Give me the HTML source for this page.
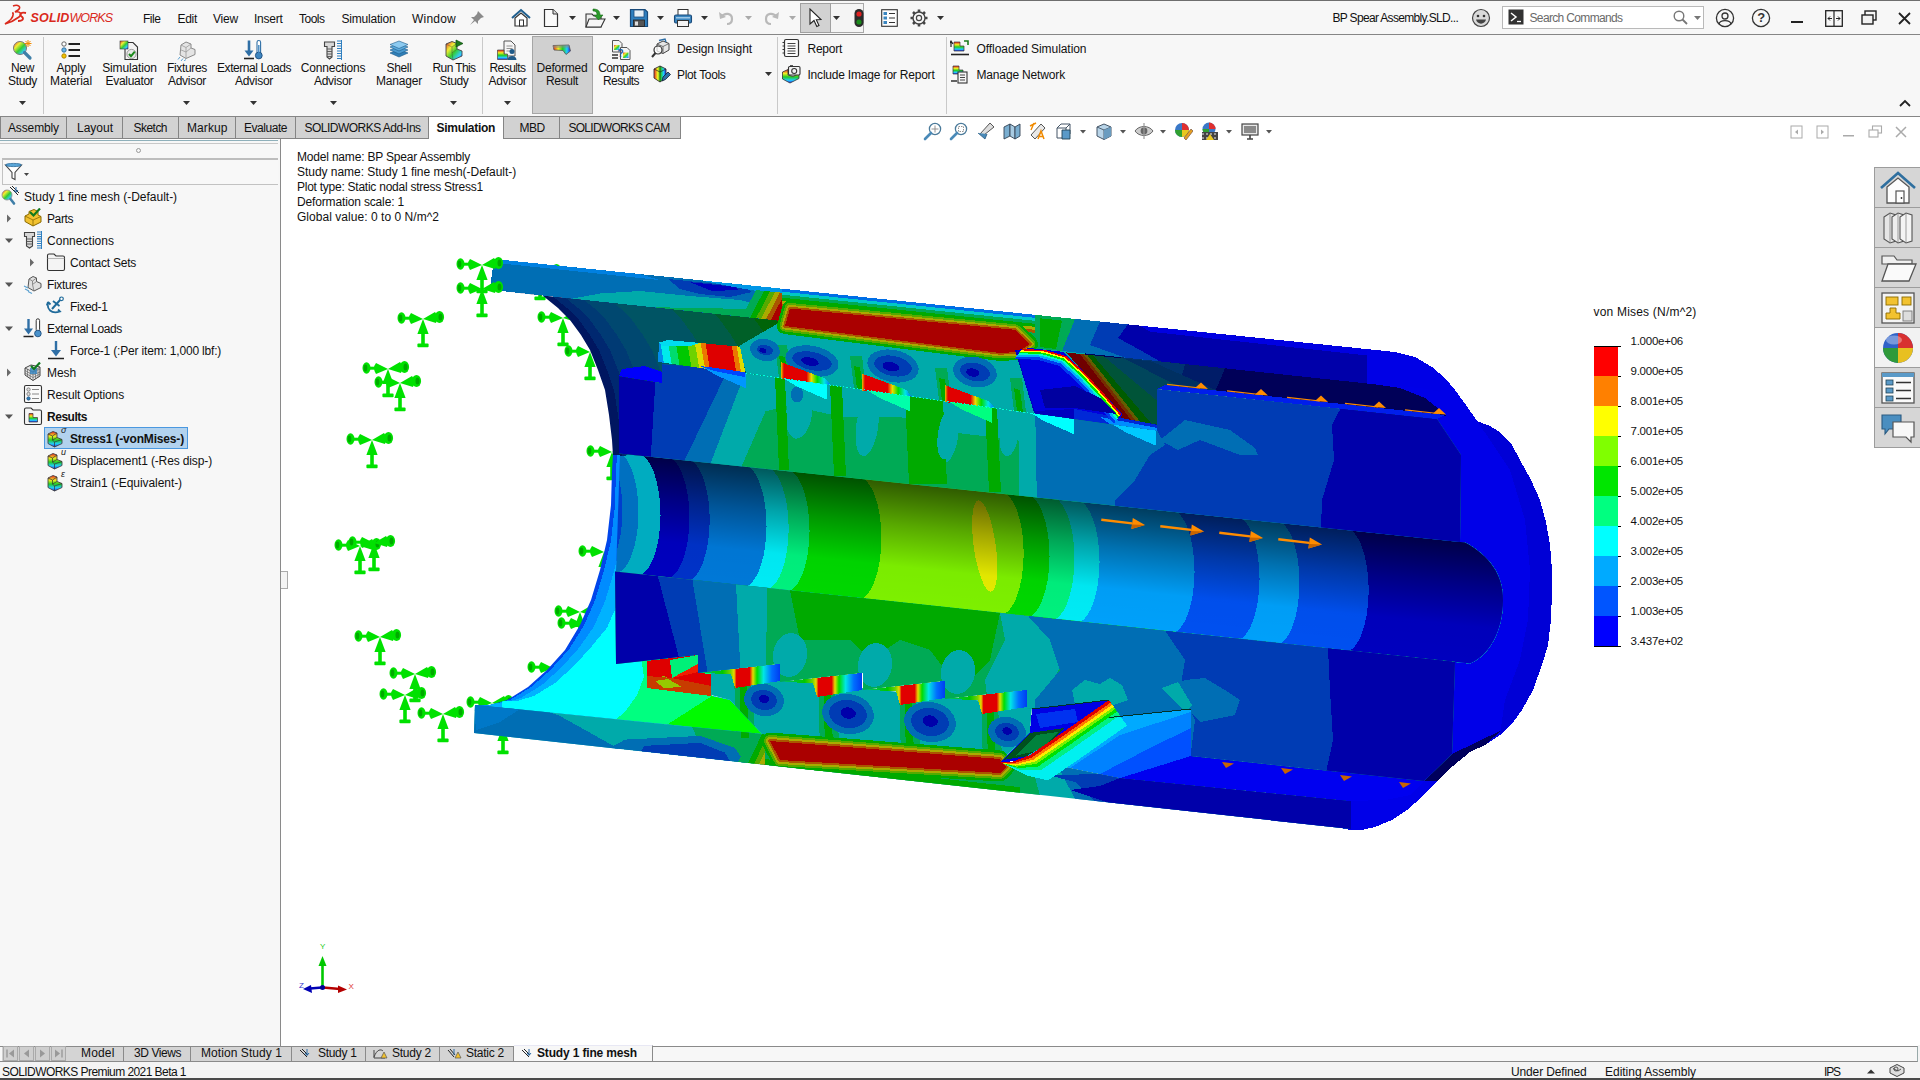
<!DOCTYPE html>
<html><head><meta charset="utf-8"><title>SOLIDWORKS Premium 2021 - BP Spear Assembly</title>
<style>
html,body{margin:0;padding:0;}
body{width:1920px;height:1080px;position:relative;overflow:hidden;background:#fff;font-family:"Liberation Sans",sans-serif;color:#111;}
.t{position:absolute;white-space:nowrap;line-height:1;font-size:12px;}
.a{position:absolute;}
#titlebar{left:0;top:0;width:1920px;height:34px;background:#f7f7f7;border-top:1px solid #6e6e6e;box-sizing:border-box;}
#tline{left:0;top:34px;width:1920px;height:1px;background:#868686;}
#ribbon{left:0;top:35px;width:1920px;height:81px;background:#f7f7f7;}
#rline{left:0;top:116px;width:1920px;height:1px;background:#868686;}
#view{left:281px;top:117px;width:1639px;height:929px;background:#fff;}
#left{left:0;top:139px;width:280px;height:907px;background:#f7f7f7;border-right:1px solid #8a8a8a;}
#lefttop{left:0;top:139px;width:278px;height:5px;background:#f7f7f7;border-top:1px solid #fff;box-shadow:inset 0 1px 0 #8fb0ba;border-bottom:1px solid #c8c8c8;box-sizing:border-box;}
.tab{position:absolute;top:116px;height:23px;background:#d2d2d2;border:1px solid #858585;box-sizing:border-box;}
.sep{position:absolute;top:37px;width:1px;height:77px;background:#c9c9c9;}
.btab{position:absolute;top:1047px;height:14px;background:#d4d4d4;border-right:1px solid #8a8a8a;box-sizing:border-box;}
#bbar{left:0;top:1046px;width:1918px;height:16px;background:#f7f7f7;border-top:1px solid #8a8a8a;border-bottom:1px solid #8a8a8a;border-right:1px solid #9aa;box-sizing:border-box;}
#status{left:0;top:1062px;width:1920px;height:16px;background:#f4f4f4;}
#sbot{left:0;top:1078px;width:1920px;height:2px;background:#4a4a4a;}
</style></head><body>
<div class="a" id="titlebar"></div><div class="a" id="tline"></div>
<div class="a" id="ribbon"></div><div class="a" id="rline"></div>
<div class="a" id="view"></div>
<div class="a" id="left"></div><div class="a" id="lefttop"></div>
<!-- ribbon separators -->
<div class="sep" style="left:43px"></div><div class="sep" style="left:482px"></div><div class="sep" style="left:777px"></div><div class="sep" style="left:946px"></div>
<div class="a" style="left:532px;top:36px;width:61px;height:78px;background:#d0d0d0;border:1px solid #a6a6a6;box-sizing:border-box;"></div>
<div class="a" style="left:800px;top:3px;width:64px;height:30px;border:1px solid #a8a8a8;box-sizing:border-box;background:#f4f4f4;"></div>
<div class="a" style="left:800px;top:3px;width:31px;height:30px;border:1px solid #a0a0a0;box-sizing:border-box;background:#d2d2d2;"></div>
<!-- command tabs -->
<div class="tab" style="left:0;width:67px"></div><div class="tab" style="left:66px;width:57px"></div><div class="tab" style="left:122px;width:57px"></div>
<div class="tab" style="left:178px;width:58px"></div><div class="tab" style="left:235px;width:61px"></div><div class="tab" style="left:295px;width:134px"></div>
<div class="tab" style="left:503px;width:57px"></div><div class="tab" style="left:559px;width:122px"></div>
<!-- search box -->
<div class="a" style="left:1502px;top:6px;width:202px;height:23px;background:#fff;border:1px solid #b9b9b9;box-sizing:border-box;"></div>
<!-- left panel bits -->
<div class="a" style="left:136px;top:148px;width:5px;height:5px;border:1px solid #999;border-radius:4px;box-sizing:border-box;"></div>
<div class="a" style="left:2px;top:158px;width:276px;height:27px;background:#f8f8f8;border:1px solid #c2c2c2;border-top:2px solid #bdbdbd;border-right:none;box-sizing:border-box;"></div>
<div class="a" style="left:44px;top:427px;width:144px;height:22px;background:#b2d2ee;border:1px solid #4a98e0;box-sizing:border-box;"></div>
<div class="a" style="left:281px;top:571px;width:7px;height:18px;border:1px solid #aaa;border-left:none;background:#f4f4f4;box-sizing:border-box;"></div>
<!-- bottom bar -->
<div class="a" id="bbar"></div>
<div class="btab" style="left:2px;width:64px;background:#d0d0d0;"></div>
<div class="btab" style="left:66px;width:58px"></div><div class="btab" style="left:124px;width:67px"></div><div class="btab" style="left:191px;width:101px"></div>
<div class="btab" style="left:292px;width:74px"></div><div class="btab" style="left:366px;width:74px"></div><div class="btab" style="left:440px;width:74px"></div>
<div class="btab" style="left:514px;top:1045px;width:139px;height:16px;background:#f7f7f7;border-top:1px solid #e8e8f4"></div>
<div class="a" id="status"></div><div class="a" id="sbot"></div>
<!-- right task pane -->
<div class="a" style="left:1874px;top:167px;width:46px;height:281px;background:#d6d6d6;border:1px solid #9c9c9c;border-right:none;box-sizing:border-box;"></div>
<div class="a" style="left:1875px;top:328px;width:45px;height:40px;background:#f2f2f2;"></div>
<div class="a" style="left:1875px;top:207px;width:45px;height:1px;background:#9c9c9c"></div><div class="a" style="left:1875px;top:247px;width:45px;height:1px;background:#9c9c9c"></div>
<div class="a" style="left:1875px;top:287px;width:45px;height:1px;background:#9c9c9c"></div><div class="a" style="left:1875px;top:327px;width:45px;height:1px;background:#9c9c9c"></div>
<div class="a" style="left:1875px;top:367px;width:45px;height:1px;background:#9c9c9c"></div><div class="a" style="left:1875px;top:407px;width:45px;height:1px;background:#9c9c9c"></div>
<div class="a" style="left:1918px;top:1045px;width:2px;height:17px;background:#f4f4f4"></div>
<svg class="a" width="0" height="0" style="left:0;top:0"><defs><linearGradient id="rb" x1="0" y1="0" x2="1" y2="1"><stop offset="0" stop-color="#e33"/><stop offset="0.3" stop-color="#ee3"/><stop offset="0.55" stop-color="#3c3"/><stop offset="0.8" stop-color="#3cf"/><stop offset="1" stop-color="#33d"/></linearGradient><linearGradient id="rbh" x1="0" y1="0" x2="1" y2="0"><stop offset="0" stop-color="#e22"/><stop offset="0.3" stop-color="#ee2"/><stop offset="0.55" stop-color="#2c2"/><stop offset="0.8" stop-color="#2cf"/><stop offset="1" stop-color="#22d"/></linearGradient><linearGradient id="rbv" x1="0" y1="0" x2="0" y2="1"><stop offset="0" stop-color="#e22"/><stop offset="0.3" stop-color="#ee2"/><stop offset="0.55" stop-color="#2c2"/><stop offset="0.8" stop-color="#2cf"/><stop offset="1" stop-color="#22d"/></linearGradient></defs></svg>
<svg class="a" style="left:4px;top:4px" width="24" height="22" viewBox="0 0 24 22"><path d="M9,2 C14,0 18,3 14,6 L11,8 C16,7 19,10 15,13 C11,16 5,19 1,20 C6,17 10,13 9,9 L8,9" fill="none" stroke="#da291c" stroke-width="1.6"/><path d="M22,9 C17,8 15,10 17,12 C20,14 20,17 14,17" fill="none" stroke="#da291c" stroke-width="1.8"/></svg>
<span class="t" style="left:30.5px;top:12px;font-size:12.5px;color:#da291c;font-style:italic;font-weight:bold;letter-spacing:0.16px">SOLID</span><span class="t" style="left:69.5px;top:12px;font-size:12.5px;color:#da291c;font-style:italic;letter-spacing:-0.94px">WORKS</span>
<svg class="a" style="left:19px;top:101px" width="7" height="4"><path d="M0,0 L7,0 L3.5,4 Z" fill="#333"/></svg>
<svg class="a" style="left:183px;top:101px" width="7" height="4"><path d="M0,0 L7,0 L3.5,4 Z" fill="#333"/></svg>
<svg class="a" style="left:250px;top:101px" width="7" height="4"><path d="M0,0 L7,0 L3.5,4 Z" fill="#333"/></svg>
<svg class="a" style="left:330px;top:101px" width="7" height="4"><path d="M0,0 L7,0 L3.5,4 Z" fill="#333"/></svg>
<svg class="a" style="left:450px;top:101px" width="7" height="4"><path d="M0,0 L7,0 L3.5,4 Z" fill="#333"/></svg>
<svg class="a" style="left:504px;top:101px" width="7" height="4"><path d="M0,0 L7,0 L3.5,4 Z" fill="#333"/></svg>
<svg class="a" style="left:765px;top:72px" width="7" height="4"><path d="M0,0 L7,0 L3.5,4 Z" fill="#333"/></svg>
<svg class="a" style="left:569px;top:16px" width="7" height="4"><path d="M0,0 L7,0 L3.5,4 Z" fill="#333"/></svg>
<svg class="a" style="left:613px;top:16px" width="7" height="4"><path d="M0,0 L7,0 L3.5,4 Z" fill="#333"/></svg>
<svg class="a" style="left:657px;top:16px" width="7" height="4"><path d="M0,0 L7,0 L3.5,4 Z" fill="#333"/></svg>
<svg class="a" style="left:701px;top:16px" width="7" height="4"><path d="M0,0 L7,0 L3.5,4 Z" fill="#333"/></svg>
<svg class="a" style="left:745px;top:16px" width="7" height="4"><path d="M0,0 L7,0 L3.5,4 Z" fill="#aaa"/></svg>
<svg class="a" style="left:789px;top:16px" width="7" height="4"><path d="M0,0 L7,0 L3.5,4 Z" fill="#aaa"/></svg>
<svg class="a" style="left:833px;top:16px" width="7" height="4"><path d="M0,0 L7,0 L3.5,4 Z" fill="#333"/></svg>
<svg class="a" style="left:937px;top:16px" width="7" height="4"><path d="M0,0 L7,0 L3.5,4 Z" fill="#333"/></svg>
<svg class="a" style="left:469px;top:10px" width="16" height="16" viewBox="0 0 16 16"><path d="M9,1 L15,7 L12,8 L9,11 L9,14 L6,11 L1,15 L5,10 L2,7 L5,7 L8,4 Z" fill="#8a8a8a"/></svg>
<svg class="a" style="left:511px;top:8px" width="20" height="20" viewBox="0 0 20 20"><path d="M1,10 L10,2 L19,10" fill="none" stroke="#1f5f8f" stroke-width="2"/><path d="M4,10 L4,18 L16,18 L16,10 L10,5 Z" fill="#fff" stroke="#333" stroke-width="1.2"/><rect x="8.5" y="12" width="4" height="6" fill="#fff" stroke="#333" stroke-width="1"/></svg>
<svg class="a" style="left:543px;top:8px" width="16" height="20" viewBox="0 0 16 20"><path d="M1.5,1.5 L10,1.5 L14.5,6 L14.5,18.5 L1.5,18.5 Z" fill="#fafafa" stroke="#333" stroke-width="1.2"/><path d="M10,1.5 L10,6 L14.5,6" fill="#ddd" stroke="#333" stroke-width="1"/></svg>
<svg class="a" style="left:584px;top:7px" width="22" height="22" viewBox="0 0 22 22"><path d="M2,7 L8,7 L10,9 L17,9 L17,20 L2,20 Z" fill="#eee" stroke="#333" stroke-width="1.1"/><path d="M5,12 L21,12 L17,20 L2,20 Z" fill="#f6f6f6" stroke="#333" stroke-width="1.1"/><path d="M9,2 C14,2 16,4 16,8 L19,8 L14.5,13 L10,8 L13,8 C13,5 12,4 9,4 Z" fill="#2a9a2a" stroke="#176a17" stroke-width="0.6"/></svg>
<svg class="a" style="left:629px;top:8px" width="20" height="20" viewBox="0 0 20 20"><path d="M1.5,1.5 L16,1.5 L18.5,4 L18.5,18.5 L1.5,18.5 Z" fill="#2f7fbf" stroke="#1a4a7a" stroke-width="1.2"/><rect x="5" y="2" width="10" height="7" fill="#e6eef5" stroke="#1a4a7a" stroke-width="0.8"/><rect x="4.5" y="12" width="11" height="6.5" fill="#555" stroke="#222" stroke-width="0.8"/><rect x="6" y="13.5" width="3" height="4" fill="#ddd"/></svg>
<svg class="a" style="left:673px;top:8px" width="20" height="20" viewBox="0 0 20 20"><rect x="5" y="1.5" width="10" height="6" fill="#fff" stroke="#333" stroke-width="1"/><rect x="1.5" y="7" width="17" height="8" rx="1.5" fill="#3a86c0" stroke="#1a4a7a" stroke-width="1.1"/><rect x="4.5" y="12.5" width="11" height="6" fill="#f4f4f4" stroke="#333" stroke-width="1"/><rect x="3" y="9" width="14" height="1.5" fill="#9cc6e6"/></svg>
<svg class="a" style="left:718px;top:9px" width="18" height="18" viewBox="0 0 18 18"><path d="M3,8 C7,3 14,4 14,10 C14,13 12,15 9,15" fill="none" stroke="#b9b9b9" stroke-width="2.2"/><path d="M1,3 L2,10 L8,8 Z" fill="#b9b9b9"/></svg>
<svg class="a" style="left:762px;top:9px" width="18" height="18" viewBox="0 0 18 18"><path d="M15,8 C11,3 4,4 4,10 C4,13 6,15 9,15" fill="none" stroke="#b9b9b9" stroke-width="2.2"/><path d="M17,3 L16,10 L10,8 Z" fill="#b9b9b9"/></svg>
<svg class="a" style="left:808px;top:8px" width="14" height="20" viewBox="0 0 14 20"><path d="M2,1 L2,16 L6,12.5 L8.8,18.5 L11,17.5 L8.3,11.7 L13,11.5 Z" fill="#fff" stroke="#222" stroke-width="1.1"/></svg>
<svg class="a" style="left:853px;top:8px" width="12" height="20" viewBox="0 0 12 20"><rect x="1.5" y="1" width="9" height="18" rx="4.5" fill="#2a2a2a"/><circle cx="6" cy="6" r="2.6" fill="#e02020"/><circle cx="6" cy="14" r="2.6" fill="#1a8a1a"/></svg>
<svg class="a" style="left:881px;top:9px" width="17" height="18" viewBox="0 0 17 18"><rect x="0.7" y="0.7" width="15.6" height="16.6" fill="#fdfdfd" stroke="#333" stroke-width="1.1"/><rect x="2.5" y="3" width="3.5" height="3" fill="#3a86c0"/><rect x="2.5" y="7.5" width="3.5" height="3" fill="#3a86c0"/><rect x="2.5" y="12" width="3.5" height="3" fill="#3a86c0"/><path d="M8,4.5 H14 M8,9 H14 M8,13.5 H14" stroke="#333" stroke-width="1.2"/></svg>
<svg class="a" style="left:909px;top:8px" width="20" height="20" viewBox="0 0 20 20"><circle cx="10" cy="10" r="6" fill="none" stroke="#444" stroke-width="1.4"/><circle cx="10" cy="10" r="2.6" fill="none" stroke="#444" stroke-width="1.2"/><path d="M10,1.5 V4 M10,16 V18.5 M1.5,10 H4 M16,10 H18.5 M4,4 L5.8,5.8 M14.2,14.2 L16,16 M16,4 L14.2,5.8 M4,16 L5.8,14.2" stroke="#444" stroke-width="2.6"/></svg>
<svg class="a" style="left:1471px;top:8px" width="20" height="20" viewBox="0 0 20 20"><circle cx="10" cy="10" r="8.5" fill="#d9d9d9" stroke="#444" stroke-width="1.2"/><circle cx="7" cy="8" r="1.3" fill="#333"/><circle cx="13" cy="8" r="1.3" fill="#333"/><path d="M5,11.5 C6,17 14,17 15,11.5 Z" fill="#444"/></svg>
<svg class="a" style="left:1508px;top:9px" width="16" height="16" viewBox="0 0 16 16"><rect x="0.5" y="0.5" width="15" height="15" fill="#333"/><path d="M3,4 L8,8 L3,12" fill="none" stroke="#fff" stroke-width="1.5"/><path d="M9,12.5 H13" stroke="#fff" stroke-width="1.3"/></svg>
<svg class="a" style="left:1672px;top:9px" width="18" height="18" viewBox="0 0 18 18"><circle cx="7" cy="7" r="4.8" fill="none" stroke="#777" stroke-width="1.4"/><path d="M10.5,10.5 L15,15" stroke="#777" stroke-width="1.8"/></svg>
<svg class="a" style="left:1694px;top:16px" width="7" height="4"><path d="M0,0 L7,0 L3.5,4 Z" fill="#777"/></svg>
<svg class="a" style="left:1715px;top:8px" width="20" height="20" viewBox="0 0 20 20"><circle cx="10" cy="10" r="8.6" fill="none" stroke="#333" stroke-width="1.3"/><circle cx="10" cy="8" r="3" fill="none" stroke="#333" stroke-width="1.3"/><path d="M4,16 C5,11.5 15,11.5 16,16" fill="none" stroke="#333" stroke-width="1.3"/></svg>
<svg class="a" style="left:1751px;top:8px" width="20" height="20" viewBox="0 0 20 20"><circle cx="10" cy="10" r="8.6" fill="none" stroke="#333" stroke-width="1.3"/></svg>
<span class="t" style="left:1757.2px;top:11px;font-size:13px;font-weight:bold;color:#333">?</span>
<svg class="a" style="left:1791px;top:21px" width="12" height="3" viewBox="0 0 12 3"><rect x="0" y="0" width="12" height="2" fill="#222"/></svg>
<svg class="a" style="left:1825px;top:10px" width="18" height="17" viewBox="0 0 18 17"><rect x="0.7" y="0.7" width="16.6" height="15.6" fill="none" stroke="#222" stroke-width="1.3"/><path d="M9,1 V16" stroke="#222" stroke-width="1.2"/><path d="M3,8.5 H7 M11,8.5 H15" stroke="#222" stroke-width="1.2"/><path d="M5,6.5 L3,8.5 L5,10.5 M13,6.5 L15,8.5 L13,10.5" fill="none" stroke="#222" stroke-width="1"/></svg>
<svg class="a" style="left:1861px;top:10px" width="16" height="16" viewBox="0 0 16 16"><rect x="4" y="1" width="11" height="9" fill="none" stroke="#222" stroke-width="1.4"/><rect x="1" y="5" width="11" height="9" fill="#f1f1f1" stroke="#222" stroke-width="1.4"/></svg>
<svg class="a" style="left:1898px;top:12px" width="13" height="13" viewBox="0 0 13 13"><path d="M1,1 L12,12 M12,1 L1,12" stroke="#222" stroke-width="1.8"/></svg>
<svg class="a" style="left:1899px;top:99px" width="12" height="8" viewBox="0 0 12 8"><path d="M1,7 L6,2 L11,7" fill="none" stroke="#222" stroke-width="1.8"/></svg>
<svg class="a" style="left:11px;top:39px" width="22" height="22" viewBox="0 0 22 22"><circle cx="9" cy="9" r="6.5" fill="url(#rb)" stroke="#777" stroke-width="1"/><path d="M13.5,13.5 L19,19" stroke="#3f7fa8" stroke-width="3.2" stroke-linecap="round"/><path d="M17,1 V8 M13.5,4.5 H20.5 M14.5,2 L19.5,7 M19.5,2 L14.5,7" stroke="#f08a00" stroke-width="1"/></svg>
<svg class="a" style="left:60px;top:39px" width="22" height="22" viewBox="0 0 22 22"><circle cx="4" cy="5" r="2.2" fill="#fff" stroke="#555" stroke-width="0.9"/><circle cx="4" cy="11" r="2.2" fill="#6bb6e6" stroke="#2a6a9a" stroke-width="0.9"/><circle cx="4" cy="17" r="2.2" fill="#f2c200" stroke="#a87f00" stroke-width="0.9"/><path d="M8.5,5 H20 M8.5,11 H20 M8.5,17 H20" stroke="#222" stroke-width="2"/></svg>
<svg class="a" style="left:118px;top:39px" width="22" height="22" viewBox="0 0 22 22"><path d="M7,3.5 L15,3.5 L19.5,8 L19.5,20.5 L7,20.5 Z" fill="#f2f2f2" stroke="#333" stroke-width="1.1"/><rect x="2" y="2" width="8" height="8" fill="url(#rb)" stroke="#333" stroke-width="0.6"/><circle cx="13.5" cy="15" r="4.6" fill="#e9e9e9" stroke="#888" stroke-width="0.8"/><path d="M11,15 L13,17.2 L16.8,12.6" fill="none" stroke="#1d8a1d" stroke-width="2"/></svg>
<svg class="a" style="left:176px;top:39px" width="22" height="22" viewBox="0 0 22 22"><path d="M5,6 L10,3 L15,5 L15,9 L19,10.5 L19,15.5 L10,19.5 L4,16 Z" fill="#e4e4e4" stroke="#8a8a8a" stroke-width="1"/><path d="M5,6 L10,8.5 L15,5 M10,8.5 V13 L15,9 M10,13 L4,10.5 M10,13 L10,19.5" fill="none" stroke="#9a9a9a" stroke-width="0.8"/><path d="M4,18 L2,20.5 M7,19.5 L5,22 M10,20.5 L8,22" stroke="#5aa0d0" stroke-width="1"/></svg>
<svg class="a" style="left:243px;top:39px" width="22" height="22" viewBox="0 0 22 22"><path d="M6,1.5 V13" stroke="#2f6fa6" stroke-width="2.6"/><path d="M1.5,11.5 L10.5,11.5 L6,17.5 Z" fill="#2f6fa6"/><path d="M1,19.5 H11" stroke="#222" stroke-width="1.6"/><rect x="14" y="1.5" width="3.6" height="13" rx="1.8" fill="#fff" stroke="#2f6fa6" stroke-width="1.1"/><circle cx="15.8" cy="16.5" r="3.4" fill="#3f86c0" stroke="#1f4f7f" stroke-width="0.9"/><path d="M15.8,6 V15" stroke="#3f86c0" stroke-width="1.4"/></svg>
<svg class="a" style="left:322px;top:39px" width="22" height="22" viewBox="0 0 22 22"><path d="M2.5,3 H12.5 V7.5 H10 V18 L7.5,20 L5,18 V7.5 H2.5 Z" fill="#d8d8d8" stroke="#444" stroke-width="1.1"/><path d="M5,10 H10 M5,12.5 H10 M5,15 H10 M5,17.5 H10" stroke="#555" stroke-width="0.9"/><path d="M15,2 H19 M15,4.5 H19 M15,7 H19 M15,9.5 H19 M15,12 H19 M15,14.5 H19 M15,17 H19 M15,19.5 H19" stroke="#2f7fc0" stroke-width="1.2"/><path d="M19.5,1 V21" stroke="#2f7fc0" stroke-width="1"/></svg>
<svg class="a" style="left:388px;top:39px" width="22" height="22" viewBox="0 0 22 22"><path d="M2,14 L11,10.5 L20,14 L11,18 Z" fill="#2f7fb8" stroke="#1f5a88" stroke-width="0.6"/><path d="M2,11 L11,7.5 L20,11 L11,15 Z" fill="#4a9ad0" stroke="#1f5a88" stroke-width="0.6"/><path d="M2,8 L11,4.5 L20,8 L11,12 Z" fill="#5aaade" stroke="#1f5a88" stroke-width="0.6"/><path d="M2,5.5 L11,2 L20,5.5 L11,9.5 Z" fill="#8ccaf0" stroke="#1f5a88" stroke-width="0.6"/></svg>
<svg class="a" style="left:443px;top:39px" width="22" height="22" viewBox="0 0 22 22"><path d="M3,5 L9,2.5 L14,4.5 L14,10 L19,12 L19,17 L10,21 L3,17 Z" fill="url(#rb)" stroke="#444" stroke-width="0.9"/><path d="M3,5 L9,8 L14,4.5 M9,8 V14 L14,10 M9,14 L10,21" fill="none" stroke="#333" stroke-width="0.6" opacity="0.6"/><path d="M13,1 L20,4.5 L13,8 Z" fill="#1d7a1d" stroke="#0c4c0c" stroke-width="0.7"/></svg>
<svg class="a" style="left:496px;top:39px" width="22" height="22" viewBox="0 0 22 22"><path d="M8,2 L15,2 L19,6 L19,17 L8,17 Z" fill="#f4f4f4" stroke="#555" stroke-width="1"/><path d="M10.5,7 H16.5 M10.5,9.5 H16.5 M10.5,12 H16.5" stroke="#888" stroke-width="0.9"/><path d="M1.5,11 H8 V15 H11.5 V20.5 H1.5 Z" fill="url(#rbv)" stroke="#444" stroke-width="0.7"/><circle cx="16" cy="12.5" r="2.5" fill="#1f5a88"/><path d="M11.5,21 C11.5,15.5 20.5,15.5 20.5,21 Z" fill="#1f5a88"/></svg>
<svg class="a" style="left:551px;top:39px" width="22" height="22" viewBox="0 0 22 22"><path d="M2,6.5 L18,6 L19.5,12 L15,15.5 L12,11.5 L3,11 Z" fill="url(#rbh)" stroke="#555" stroke-width="0.8"/><path d="M2,6.5 L18,6 L18,8.5 L2,9 Z" fill="#8a8a8a" opacity="0.55"/></svg>
<svg class="a" style="left:610px;top:39px" width="22" height="22" viewBox="0 0 22 22"><path d="M2.5,1.5 L9,1.5 L12,4.5 L12,13 L2.5,13 Z" fill="#f4f4f4" stroke="#555" stroke-width="1"/><rect x="4" y="6" width="5.5" height="5" fill="url(#rb)"/><path d="M10.5,8.5 L17,8.5 L20,11.5 L20,20.5 L10.5,20.5 Z" fill="#f4f4f4" stroke="#555" stroke-width="1"/><rect x="13" y="13.5" width="5.5" height="5.5" fill="url(#rb)"/><path d="M2,16 H8 M2,19 H8" stroke="#333" stroke-width="1.6"/></svg>
<span class="t" style="left:617.5px;top:48.5px;font-size:10px;font-weight:bold;color:#1f5a9a">?</span>
<svg class="a" style="left:651px;top:38px" width="20" height="20" viewBox="0 0 20 20"><path d="M6,6 L12,3 L18,5.5 L18,12 L12,15.5 L6,13 Z" fill="#e6e6e6" stroke="#444" stroke-width="1"/><path d="M6,6 L12,8.5 L18,5.5 M12,8.5 V15.5" fill="none" stroke="#555" stroke-width="0.8"/><path d="M8,2.5 L14,1 L15,4" fill="none" stroke="#2f6fa6" stroke-width="1.4"/><circle cx="7" cy="12" r="4" fill="#fff" fill-opacity="0.7" stroke="#333" stroke-width="1.2"/><path d="M4.5,15 L1,19" stroke="#333" stroke-width="2"/></svg>
<svg class="a" style="left:651px;top:64px" width="20" height="20" viewBox="0 0 20 20"><path d="M3,5 L9,2 L15,5 L15,14 L9,18 L3,14 Z" fill="url(#rbh)" stroke="#333" stroke-width="0.9"/><path d="M9,2 V18 M3,5 L9,8 L15,5" fill="none" stroke="#222" stroke-width="0.7"/><path d="M12,13 L17,8 L19.5,10.5 L14.5,15.5 L11,17 Z" fill="#2f6fa6" stroke="#123" stroke-width="0.8"/></svg>
<svg class="a" style="left:781px;top:38px" width="20" height="20" viewBox="0 0 20 20"><rect x="3.5" y="1.5" width="14" height="17" rx="1.5" fill="#fbfbfb" stroke="#333" stroke-width="1.2"/><path d="M6.5,5.5 H14.5 M6.5,8 H14.5 M6.5,10.5 H14.5 M6.5,13 H14.5 M6.5,15.5 H14.5" stroke="#444" stroke-width="1"/><path d="M1.5,4.5 H4 M1.5,8 H4 M1.5,11.5 H4 M1.5,15 H4" stroke="#333" stroke-width="1.2"/></svg>
<svg class="a" style="left:781px;top:64px" width="20" height="20" viewBox="0 0 20 20"><path d="M1.5,8 L7,5.5 L7,11 L12,12.5 L18,9.5 L18,14.5 L9,19 L1.5,15 Z" fill="url(#rbv)" stroke="#333" stroke-width="0.8"/><rect x="7.5" y="2.5" width="11.5" height="8.5" rx="1.2" fill="#f2f2f2" stroke="#333" stroke-width="1.1"/><circle cx="13.2" cy="7" r="2.5" fill="none" stroke="#333" stroke-width="1.1"/><rect x="9" y="1.2" width="3" height="1.8" fill="#333"/></svg>
<svg class="a" style="left:950px;top:38px" width="20" height="20" viewBox="0 0 20 20"><path d="M4,4 H10 V8 H14 V13 H4 Z" fill="url(#rbv)" stroke="#333" stroke-width="0.7"/><path d="M1,16.5 H19" stroke="#222" stroke-width="1.6"/><path d="M1,3 L1,9 M-1,6 L1,3 L3,6" fill="none" stroke="#222" stroke-width="1.2"/><path d="M14,3 L18,3 L18,7" fill="none" stroke="#1d7a1d" stroke-width="1.6"/></svg>
<svg class="a" style="left:950px;top:64px" width="20" height="20" viewBox="0 0 20 20"><path d="M3,2 H9 V6 H13 V10 H3 Z" fill="url(#rbv)" stroke="#333" stroke-width="0.7"/><rect x="8" y="8" width="9" height="11" fill="#f6f6f6" stroke="#333" stroke-width="1.1"/><path d="M10,11 H15 M10,13.5 H15 M10,16 H15" stroke="#444" stroke-width="1"/><path d="M1,17 H7" stroke="#222" stroke-width="1.4"/></svg>
<svg class="a" style="left:6px;top:214px" width="6" height="9" viewBox="0 0 6 9"><path d="M1,0.5 L5,4.5 L1,8.5 Z" fill="#6a6a6a"/></svg>
<svg class="a" style="left:5px;top:238px" width="9" height="6" viewBox="0 0 9 6"><path d="M0,0.5 L8,0.5 L4,5 Z" fill="#555"/></svg>
<svg class="a" style="left:29px;top:258px" width="6" height="9" viewBox="0 0 6 9"><path d="M1,0.5 L5,4.5 L1,8.5 Z" fill="#6a6a6a"/></svg>
<svg class="a" style="left:5px;top:282px" width="9" height="6" viewBox="0 0 9 6"><path d="M0,0.5 L8,0.5 L4,5 Z" fill="#555"/></svg>
<svg class="a" style="left:5px;top:326px" width="9" height="6" viewBox="0 0 9 6"><path d="M0,0.5 L8,0.5 L4,5 Z" fill="#555"/></svg>
<svg class="a" style="left:6px;top:368px" width="6" height="9" viewBox="0 0 6 9"><path d="M1,0.5 L5,4.5 L1,8.5 Z" fill="#6a6a6a"/></svg>
<svg class="a" style="left:5px;top:414px" width="9" height="6" viewBox="0 0 9 6"><path d="M0,0.5 L8,0.5 L4,5 Z" fill="#555"/></svg>
<svg class="a" style="left:4px;top:162px" width="26" height="20" viewBox="0 0 26 20"><path d="M1.5,3 H17.5 L11,10.5 V17.5 L8,16 V10.5 Z" fill="#fff" stroke="#444" stroke-width="1.1"/><ellipse cx="9.5" cy="3" rx="8" ry="1.6" fill="#5aa6d8" stroke="#2a6a9a" stroke-width="0.8"/><path d="M20,11 L25,11 L22.5,14 Z" fill="#444"/></svg>
<svg class="a" style="left:0px;top:186px" width="20" height="20" viewBox="0 0 20 20"><circle cx="7" cy="9" r="5" fill="url(#rb)" stroke="#888" stroke-width="0.8"/><path d="M10.5,13 L14,17.5" stroke="#3f7fa8" stroke-width="2.6" stroke-linecap="round"/><path d="M10,1 L18,9 M12,0 L19,7" stroke="#222" stroke-width="1"/><path d="M16,1 V6 M14,4 L16,6.5 L18,4" fill="none" stroke="#2a6aa6" stroke-width="1"/></svg>
<svg class="a" style="left:23px;top:208px" width="20" height="20" viewBox="0 0 20 20"><path d="M2,8 L6,6 L6,3.5 L11,1.5 L15,3.5 L15,7 L18,8.5 L18,14 L10,18 L2,13.5 Z" fill="#f2c230" stroke="#8a6a00" stroke-width="1"/><path d="M2,8 L10,12 L18,8.5 M10,12 V18" fill="none" stroke="#8a6a00" stroke-width="0.8"/><path d="M7,4 L10.5,7.5 L17,0.5" fill="none" stroke="#0f7a1f" stroke-width="2.2"/></svg>
<svg class="a" style="left:23px;top:230px" width="20" height="20" viewBox="0 0 20 20"><path d="M1.5,2.5 H11.5 V6.5 H9.5 V16 L6.5,18 L3.5,16 V6.5 H1.5 Z" fill="#d8d8d8" stroke="#444" stroke-width="1.1"/><path d="M3.5,9 H9.5 M3.5,11.5 H9.5 M3.5,14 H9.5" stroke="#555" stroke-width="0.9"/><path d="M14,2 H18 M14,4.3 H18 M14,6.6 H18 M14,8.9 H18 M14,11.2 H18 M14,13.5 H18 M14,15.8 H18 M14,18 H18" stroke="#2f7fc0" stroke-width="1.1"/><path d="M18.5,1 V19" stroke="#2f7fc0" stroke-width="1"/></svg>
<svg class="a" style="left:46px;top:252px" width="20" height="20" viewBox="0 0 20 20"><path d="M1.5,3.5 Q1.5,2 3,2 H8 L10,4 H17 Q18.5,4 18.5,5.5 V17 Q18.5,18.5 17,18.5 H3 Q1.5,18.5 1.5,17 Z" fill="#f4f4f4" stroke="#333" stroke-width="1.1"/><path d="M1.5,6.5 H18.5" stroke="#999" stroke-width="0.7"/></svg>
<svg class="a" style="left:23px;top:274px" width="20" height="20" viewBox="0 0 20 20"><path d="M6,5 L10,2.5 L13.5,4 L13.5,7.5 L18,9.5 L18,13.5 L11,17 L5,13.5 Z" fill="#e0e0e0" stroke="#555" stroke-width="1"/><path d="M6,5 L9.5,7 L13.5,4 M9.5,7 V10.5 L13.5,7.5 M9.5,10.5 L11,17" fill="none" stroke="#777" stroke-width="0.8"/><path d="M1,12 L5,14 M2,15 L6,17 M5,17.5 L9,19.5" stroke="#5aa0d0" stroke-width="1.1"/></svg>
<svg class="a" style="left:46px;top:296px" width="20" height="20" viewBox="0 0 20 20"><path d="M14.5,3.5 L6,13" stroke="#1f6a9a" stroke-width="2"/><circle cx="15.5" cy="2.8" r="1.8" fill="#fff" stroke="#1f6a9a" stroke-width="1.2"/><path d="M7,5 L13.5,10" stroke="#1f6a9a" stroke-width="1.8"/><path d="M2,6 C0.5,13 5,18.5 14,15.5 L12,13.5 M2,6 L0.8,9.5 M2,6 L4.5,8.5" fill="none" stroke="#1f6a9a" stroke-width="1.8"/></svg>
<svg class="a" style="left:23px;top:318px" width="20" height="20" viewBox="0 0 20 20"><path d="M5.5,1 V12" stroke="#2f6fa6" stroke-width="2.4"/><path d="M1,10.5 L10,10.5 L5.5,16.5 Z" fill="#2f6fa6"/><path d="M0.5,18.5 H10.5" stroke="#222" stroke-width="1.5"/><rect x="13.2" y="0.8" width="3.4" height="12.5" rx="1.7" fill="#fff" stroke="#333" stroke-width="1"/><circle cx="14.9" cy="15.5" r="3.3" fill="#4a92cc" stroke="#1f4f7f" stroke-width="0.9"/></svg>
<svg class="a" style="left:46px;top:340px" width="20" height="20" viewBox="0 0 20 20"><path d="M10,1 V12" stroke="#2f6fa6" stroke-width="2.4"/><path d="M5,10 L15,10 L10,16.5 Z" fill="#2f6fa6"/><path d="M2,18.5 H18" stroke="#222" stroke-width="1.5"/></svg>
<svg class="a" style="left:23px;top:362px" width="20" height="20" viewBox="0 0 20 20"><path d="M2,6 L8,3 L17,5 L17,14 L10,18.5 L2,13 Z" fill="#e8e8e8" stroke="#444" stroke-width="1"/><path d="M2,8.5 L10,13 M2,11 L10,15.5 M4.5,7.2 V15 M7.2,8.5 V16.5 M10,10 V18.5 M12.5,9 V17 M15,7.5 V15.5 M10,10 L17,7 M10,13 L17,10 M10,15.5 L17,12" stroke="#555" stroke-width="0.6"/><path d="M2,6 L10,10 L17,5" fill="none" stroke="#444" stroke-width="0.8"/><rect x="7" y="6" width="7" height="6" fill="#3a86c0" opacity="0.85"/><path d="M8,4 L11,7 L17,0.5" fill="none" stroke="#0f7a1f" stroke-width="2.2"/></svg>
<svg class="a" style="left:23px;top:384px" width="20" height="20" viewBox="0 0 20 20"><rect x="1.5" y="1.5" width="17" height="17" rx="1.5" fill="#fafafa" stroke="#333" stroke-width="1.1"/><circle cx="5.5" cy="5.5" r="1.7" fill="#ddd" stroke="#666" stroke-width="0.7"/><circle cx="5.5" cy="10" r="1.7" fill="#ddd" stroke="#666" stroke-width="0.7"/><circle cx="5.5" cy="14.5" r="1.7" fill="#2f7fb8" stroke="#1f4f7f" stroke-width="0.7"/><path d="M9,5.5 H16 M9,10 H16 M9,14.5 H16" stroke="#888" stroke-width="1"/></svg>
<svg class="a" style="left:23px;top:406px" width="20" height="20" viewBox="0 0 20 20"><path d="M1.5,3.5 Q1.5,2 3,2 H8 L10,4 H17 Q18.5,4 18.5,5.5 V17 Q18.5,18.5 17,18.5 H3 Q1.5,18.5 1.5,17 Z" fill="#f4f4f4" stroke="#333" stroke-width="1.1"/><path d="M6,7.5 H10 V11.5 H14.5 V16 H6 Z" fill="url(#rbv)" stroke="#333" stroke-width="0.7"/></svg>
<svg class="a" style="left:46px;top:428px" width="20" height="20" viewBox="0 0 20 20"><path d="M2,6 L7,3.5 L11,5 L11,9.5 L16,11.5 L16,15.5 L8.5,19 L2,15.5 Z" fill="url(#rbv)" stroke="#444" stroke-width="0.9"/><path d="M2,6 L6.5,8 L11,5 M6.5,8 V12 L11,9.5 M6.5,12 L8.5,14 L16,11.5 M8.5,14 V19" fill="none" stroke="#333" stroke-width="0.7"/></svg>
<span class="t" style="left:61px;top:426px;font-size:9px;font-style:italic;color:#222">σ</span>
<svg class="a" style="left:46px;top:450px" width="20" height="20" viewBox="0 0 20 20"><path d="M2,6 L7,3.5 L11,5 L11,9.5 L16,11.5 L16,15.5 L8.5,19 L2,15.5 Z" fill="url(#rbv)" stroke="#444" stroke-width="0.9"/><path d="M2,6 L6.5,8 L11,5 M6.5,8 V12 L11,9.5 M6.5,12 L8.5,14 L16,11.5 M8.5,14 V19" fill="none" stroke="#333" stroke-width="0.7"/></svg>
<span class="t" style="left:61px;top:448px;font-size:9px;font-style:italic;color:#222">u</span>
<svg class="a" style="left:46px;top:472px" width="20" height="20" viewBox="0 0 20 20"><path d="M2,6 L7,3.5 L11,5 L11,9.5 L16,11.5 L16,15.5 L8.5,19 L2,15.5 Z" fill="url(#rbv)" stroke="#444" stroke-width="0.9"/><path d="M2,6 L6.5,8 L11,5 M6.5,8 V12 L11,9.5 M6.5,12 L8.5,14 L16,11.5 M8.5,14 V19" fill="none" stroke="#333" stroke-width="0.7"/></svg>
<span class="t" style="left:61px;top:470px;font-size:9px;font-style:italic;color:#222">ε</span>
<svg class="a" style="left:923px;top:121px" width="20" height="20" viewBox="0 0 20 20"><circle cx="12" cy="8" r="5.6" fill="#fff" stroke="#4a7a9a" stroke-width="1.3"/><path d="M8,12 L2,18" stroke="#4a8ab8" stroke-width="2.6" stroke-linecap="round"/><path d="M12,4.5 V11.5 M8.5,8 H15.5" stroke="#888" stroke-width="0.9"/></svg>
<svg class="a" style="left:949px;top:121px" width="20" height="20" viewBox="0 0 20 20"><circle cx="12" cy="8" r="5.6" fill="#fff" stroke="#4a7a9a" stroke-width="1.3"/><path d="M8,12 L2,18" stroke="#4a8ab8" stroke-width="2.6" stroke-linecap="round"/><rect x="9.5" y="5.5" width="5" height="5" fill="none" stroke="#888" stroke-width="0.9" stroke-dasharray="1.5,1"/></svg>
<svg class="a" style="left:976px;top:121px" width="20" height="20" viewBox="0 0 20 20"><path d="M14,2 L18,6 L8,14 L4,13 Z" fill="#ddd" stroke="#555" stroke-width="1"/><path d="M2,12 L9,18 L11,13" fill="#4a8ab8" stroke="#2a5a80" stroke-width="0.8"/></svg>
<svg class="a" style="left:1002px;top:121px" width="20" height="20" viewBox="0 0 20 20"><path d="M2,6 L8,3 L8,15 L2,18 Z" fill="#7aaed0" stroke="#345" stroke-width="0.9"/><path d="M8,3 L13,6 L13,18 L8,15 Z" fill="#a8cbe2" stroke="#345" stroke-width="0.9"/><path d="M13,6 L18,3 L18,15 L13,18 Z" fill="#7aaed0" stroke="#345" stroke-width="0.9"/></svg>
<svg class="a" style="left:1028px;top:121px" width="20" height="20" viewBox="0 0 20 20"><path d="M3,14 L13,3 L17,7 L7,18 Z" fill="#e8e8e8" stroke="#555" stroke-width="1"/><path d="M2,5 L8,2 M3,9 L6,2 " stroke="#f08a00" stroke-width="1.4"/><path d="M10,18 L13,10 L16,18 M11,15.5 H15" fill="none" stroke="#f08a00" stroke-width="1.5"/></svg>
<svg class="a" style="left:1054px;top:121px" width="20" height="20" viewBox="0 0 20 20"><path d="M3,7 L12,7 L12,17 L3,17 Z M3,7 L7,3 L16,3 L12,7 M16,3 L16,13 L12,17" fill="#fff" stroke="#456" stroke-width="1"/><path d="M8,9 L16,9 L16,18 L8,18 Z" fill="#5a9ac8" stroke="#245" stroke-width="0.9"/></svg>
<svg class="a" style="left:1094px;top:121px" width="20" height="20" viewBox="0 0 20 20"><path d="M3,6 L10,3 L17,6 L17,15 L10,18.5 L3,15 Z" fill="#b8d4e8" stroke="#456" stroke-width="1"/><path d="M3,6 L10,9 L17,6 M10,9 V18.5" fill="none" stroke="#456" stroke-width="0.9"/><path d="M10,9 L17,6 L17,15 L10,18.5 Z" fill="#6a9cc0"/></svg>
<svg class="a" style="left:1134px;top:121px" width="20" height="20" viewBox="0 0 20 20"><path d="M1,10 C5,4 15,4 19,10 C15,16 5,16 1,10 Z" fill="#ccc" stroke="#666" stroke-width="1"/><circle cx="10" cy="10" r="3.4" fill="#666"/><path d="M10,2 V18" stroke="#999" stroke-width="1.2"/></svg>
<svg class="a" style="left:1173px;top:121px" width="20" height="20" viewBox="0 0 20 20"><circle cx="9" cy="9" r="7" fill="#3a78c8"/><path d="M9,9 L9,2 A7,7 0 0 1 16,9 Z" fill="#e03030"/><path d="M9,9 L16,9 A7,7 0 0 1 9,16 Z" fill="#e8c820"/><path d="M9,9 L9,16 A7,7 0 0 1 2,9 Z" fill="#30a030"/><path d="M11,17 L18,8 L20,10 L13,19 Z" fill="#e8a020" stroke="#754" stroke-width="0.7"/></svg>
<svg class="a" style="left:1200px;top:121px" width="20" height="20" viewBox="0 0 20 20"><circle cx="9" cy="8" r="6.5" fill="#3a78c8"/><path d="M9,8 L9,1.5 A6.5,6.5 0 0 1 15.5,8 Z" fill="#e03030"/><path d="M9,8 L2.5,8 A6.5,6.5 0 0 0 9,14.5 Z" fill="#30a030"/><rect x="2" y="11" width="16" height="8" fill="#444"/><path d="M2,13 H18 M2,17 H18" stroke="#eee" stroke-width="1.2" stroke-dasharray="2,2"/><path d="M6,19 L10,13 L14,19 Z" fill="#e8c820"/></svg>
<svg class="a" style="left:1240px;top:121px" width="20" height="20" viewBox="0 0 20 20"><rect x="2" y="3" width="16" height="11" fill="#e8e8e8" stroke="#444" stroke-width="1.2"/><rect x="4" y="5" width="12" height="7" fill="#8a8a8a"/><path d="M7,18 H13 M10,14 V18" stroke="#444" stroke-width="1.6"/></svg>
<svg class="a" style="left:1080px;top:130px" width="6" height="4"><path d="M0,0 L6,0 L3,3.5 Z" fill="#555"/></svg>
<svg class="a" style="left:1120px;top:130px" width="6" height="4"><path d="M0,0 L6,0 L3,3.5 Z" fill="#555"/></svg>
<svg class="a" style="left:1160px;top:130px" width="6" height="4"><path d="M0,0 L6,0 L3,3.5 Z" fill="#555"/></svg>
<svg class="a" style="left:1226px;top:130px" width="6" height="4"><path d="M0,0 L6,0 L3,3.5 Z" fill="#555"/></svg>
<svg class="a" style="left:1266px;top:130px" width="6" height="4"><path d="M0,0 L6,0 L3,3.5 Z" fill="#555"/></svg>
<svg class="a" style="left:1790px;top:125px" width="14" height="14" viewBox="0 0 14 14"><rect x="1" y="1" width="11" height="12" fill="none" stroke="#aaa" stroke-width="1"/><path d="M8,4.5 L5,7 L8,9.5 Z" fill="#aaa"/></svg>
<svg class="a" style="left:1816px;top:125px" width="14" height="14" viewBox="0 0 14 14"><rect x="1" y="1" width="11" height="12" fill="none" stroke="#aaa" stroke-width="1"/><path d="M5,4.5 L8,7 L5,9.5 Z" fill="#aaa"/></svg>
<svg class="a" style="left:1843px;top:135px" width="12" height="3" viewBox="0 0 12 3"><rect x="0" y="0" width="11" height="1.5" fill="#aaa"/></svg>
<svg class="a" style="left:1868px;top:125px" width="16" height="14" viewBox="0 0 16 14"><rect x="4.5" y="1" width="9" height="7" fill="none" stroke="#aaa" stroke-width="1.1"/><rect x="1" y="5" width="9" height="7" fill="#fff" stroke="#aaa" stroke-width="1.1"/></svg>
<svg class="a" style="left:1895px;top:126px" width="12" height="12" viewBox="0 0 12 12"><path d="M1,1 L11,11 M11,1 L1,11" stroke="#aaa" stroke-width="1.5"/></svg>
<svg class="a" style="left:1879px;top:170px" width="38" height="36" viewBox="0 0 38 36"><path d="M2,18 L19,3 L36,18" fill="none" stroke="#2f6f9f" stroke-width="2.6"/><path d="M8,17 V33 H30 V17 L19,8 Z" fill="#fdfdfd" stroke="#555" stroke-width="1.3"/><rect x="17" y="21" width="8" height="12" fill="#fff" stroke="#555" stroke-width="1.2"/><circle cx="22.5" cy="28" r="0.9" fill="#333"/></svg>
<svg class="a" style="left:1879px;top:210px" width="38" height="36" viewBox="0 0 38 36"><path d="M5,7 L11,3 L17,5 L17,31 L11,33 L5,29 Z" fill="#e6e6e6" stroke="#555" stroke-width="1.1"/><path d="M13,7 L19,3 L25,5 L25,31 L19,33 L13,29 Z" fill="#eee" stroke="#555" stroke-width="1.1"/><path d="M21,7 L27,3 L33,5 L33,31 L27,33 L21,29 Z" fill="#f4f4f4" stroke="#555" stroke-width="1.1"/><path d="M11,3 V33 M19,3 V33 M27,3 V33" stroke="#777" stroke-width="0.7"/></svg>
<svg class="a" style="left:1879px;top:250px" width="38" height="36" viewBox="0 0 38 36"><path d="M3,6 H15 L18,10 H33 V14 H3 Z" fill="#f0f0f0" stroke="#555" stroke-width="1.2"/><path d="M9,14 H37 L30,31 H3 Z" fill="#fafafa" stroke="#555" stroke-width="1.3"/></svg>
<svg class="a" style="left:1879px;top:290px" width="38" height="36" viewBox="0 0 38 36"><rect x="3" y="3" width="32" height="30" fill="#f4f4f4" stroke="#555" stroke-width="1.3"/><rect x="7" y="7" width="12" height="8" fill="#f2c230" stroke="#8a6a00" stroke-width="0.9"/><rect x="23" y="7" width="9" height="8" fill="#f2c230" stroke="#8a6a00" stroke-width="0.9"/><path d="M11,18 H17 V23 H21 V29 H7 V23 H11 Z" fill="#f2c230" stroke="#8a6a00" stroke-width="0.9"/><rect x="24" y="21" width="9" height="10" fill="#ddd" stroke="#777" stroke-width="0.9"/></svg>
<svg class="a" style="left:1879px;top:330px" width="38" height="36" viewBox="0 0 38 36"><circle cx="19" cy="18" r="15" fill="#2f62c8"/><path d="M19,18 L19,3 A15,15 0 0 1 34,18 Z" fill="#d83030"/><path d="M19,18 L34,18 A15,15 0 0 1 19,33 Z" fill="#e8c020"/><path d="M19,18 L19,33 A15,15 0 0 1 4,18 Z" fill="#2f9a3a"/><ellipse cx="15" cy="10" rx="8" ry="4.5" fill="#fff" opacity="0.35"/></svg>
<svg class="a" style="left:1879px;top:370px" width="38" height="36" viewBox="0 0 38 36"><rect x="3" y="3" width="32" height="30" fill="#fafafa" stroke="#555" stroke-width="1.3"/><rect x="3" y="3" width="32" height="4" fill="#5a9ac8"/><rect x="7" y="10" width="7" height="5" fill="#5a9ac8" stroke="#245" stroke-width="0.8"/><rect x="7" y="18" width="7" height="5" fill="#5a9ac8" stroke="#245" stroke-width="0.8"/><rect x="7" y="26" width="7" height="5" fill="#5a9ac8" stroke="#245" stroke-width="0.8"/><path d="M17,12.5 H32 M17,20.5 H32 M17,28.5 H32" stroke="#333" stroke-width="1.6"/></svg>
<svg class="a" style="left:1879px;top:410px" width="38" height="36" viewBox="0 0 38 36"><path d="M3,5 H22 V19 H10 L6,24 V19 H3 Z" fill="#4a8ec0" stroke="#2a5a80" stroke-width="1.1"/><path d="M14,12 H35 V27 H32 V32 L27,27 H14 Z" fill="#f8f8f8" stroke="#555" stroke-width="1.2"/></svg>
<svg class="a" style="left:3px;top:1046px" width="15" height="15" viewBox="0 0 15 15"><rect x="0.5" y="0.5" width="14" height="14" fill="#cfcfcf" stroke="#aaa" stroke-width="1"/><path d="M4,3.5 V11.5" stroke="#999" stroke-width="1.4"/><path d="M11,3.5 L6,7.5 L11,11.5 Z" fill="#999"/></svg>
<svg class="a" style="left:19px;top:1046px" width="15" height="15" viewBox="0 0 15 15"><rect x="0.5" y="0.5" width="14" height="14" fill="#cfcfcf" stroke="#aaa" stroke-width="1"/><path d="M10,3.5 L5,7.5 L10,11.5 Z" fill="#999"/></svg>
<svg class="a" style="left:35px;top:1046px" width="15" height="15" viewBox="0 0 15 15"><rect x="0.5" y="0.5" width="14" height="14" fill="#cfcfcf" stroke="#aaa" stroke-width="1"/><path d="M5,3.5 L10,7.5 L5,11.5 Z" fill="#999"/></svg>
<svg class="a" style="left:51px;top:1046px" width="15" height="15" viewBox="0 0 15 15"><rect x="0.5" y="0.5" width="14" height="14" fill="#cfcfcf" stroke="#aaa" stroke-width="1"/><path d="M11,3.5 V11.5" stroke="#999" stroke-width="1.4"/><path d="M4,3.5 L9,7.5 L4,11.5 Z" fill="#999"/></svg>
<svg class="a" style="left:298px;top:1047px" width="15" height="13" viewBox="0 0 15 13"><path d="M2,3 L9,10 M4,2 L10,8" stroke="#222" stroke-width="1"/><path d="M9,2 V8 M7,6 L9,8.5 L11,6" fill="none" stroke="#2a6aa6" stroke-width="1"/></svg>
<svg class="a" style="left:373px;top:1047px" width="15" height="13" viewBox="0 0 15 13"><path d="M1,11 L1,3 M1,11 H12" stroke="#444" stroke-width="1"/><path d="M1,10 C4,2 8,2 10,4" fill="none" stroke="#444" stroke-width="1"/><path d="M8,11 L11,5 L14,11 Z" fill="#f2c230" stroke="#555" stroke-width="0.7"/></svg>
<svg class="a" style="left:447px;top:1047px" width="15" height="13" viewBox="0 0 15 13"><path d="M1,3 L7,10 M3,2 L8,8" stroke="#222" stroke-width="1"/><path d="M7,2 V8" stroke="#2a6aa6" stroke-width="1"/><path d="M8,11 L11,5 L14,11 Z" fill="#f2c230" stroke="#555" stroke-width="0.7"/></svg>
<svg class="a" style="left:520px;top:1047px" width="15" height="13" viewBox="0 0 15 13"><path d="M2,3 L9,10 M4,2 L10,8" stroke="#222" stroke-width="1"/><path d="M9,2 V8 M7,6 L9,8.5 L11,6" fill="none" stroke="#2a6aa6" stroke-width="1"/></svg>
<svg class="a" style="left:1867px;top:1069px" width="8" height="5" viewBox="0 0 8 5"><path d="M0,4.5 L4,0.5 L8,4.5 Z" fill="#333"/></svg>
<svg class="a" style="left:1888px;top:1063px" width="18" height="15" viewBox="0 0 18 15"><path d="M2,5 L9,1.5 L16,5 L16,10 L9,13.5 L2,10 Z" fill="#ddd" stroke="#444" stroke-width="1"/><path d="M5,5.5 L10,8 L13,6" fill="none" stroke="#444" stroke-width="0.9"/><circle cx="8" cy="6" r="2" fill="none" stroke="#444" stroke-width="0.9"/></svg>
<div class="a" style="left:1594px;top:346px;width:24px;height:30px;background:#ff0000"></div>
<div class="a" style="left:1594px;top:376px;width:24px;height:30px;background:#ff8000"></div>
<div class="a" style="left:1594px;top:406px;width:24px;height:30px;background:#ffff00"></div>
<div class="a" style="left:1594px;top:436px;width:24px;height:30px;background:#80ff00"></div>
<div class="a" style="left:1594px;top:466px;width:24px;height:30px;background:#00e600"></div>
<div class="a" style="left:1594px;top:496px;width:24px;height:30px;background:#00ff80"></div>
<div class="a" style="left:1594px;top:526px;width:24px;height:30px;background:#00ffff"></div>
<div class="a" style="left:1594px;top:556px;width:24px;height:30px;background:#00aaff"></div>
<div class="a" style="left:1594px;top:586px;width:24px;height:30px;background:#0055ff"></div>
<div class="a" style="left:1594px;top:616px;width:24px;height:30px;background:#0000ff"></div>
<div class="a" style="left:1594px;top:346px;width:27px;height:1px;background:#000"></div>
<div class="a" style="left:1594px;top:646px;width:27px;height:1px;background:#000"></div>
<div class="a" style="left:1618px;top:376px;width:3px;height:1px;background:#000"></div>
<div class="a" style="left:1618px;top:406px;width:3px;height:1px;background:#000"></div>
<div class="a" style="left:1618px;top:436px;width:3px;height:1px;background:#000"></div>
<div class="a" style="left:1618px;top:466px;width:3px;height:1px;background:#000"></div>
<div class="a" style="left:1618px;top:496px;width:3px;height:1px;background:#000"></div>
<div class="a" style="left:1618px;top:526px;width:3px;height:1px;background:#000"></div>
<div class="a" style="left:1618px;top:556px;width:3px;height:1px;background:#000"></div>
<div class="a" style="left:1618px;top:586px;width:3px;height:1px;background:#000"></div>
<div class="a" style="left:1618px;top:616px;width:3px;height:1px;background:#000"></div>
<span class="t" style="left:320px;top:943px;font-size:8px;color:#2c2">Y</span><span class="t" style="left:348.5px;top:983px;font-size:8px;color:#d33">X</span><span class="t" style="left:299px;top:982px;font-size:8px;color:#33c">Z</span>
<svg class="a" style="left:0;top:0" width="1920" height="1080" viewBox="0 0 1920 1080"><defs><clipPath id="boreclip"><path d="M619,453.5 L1465,542.5 C1490,556 1503,575 1503,600 C1503,630 1490,655 1470,663.4 L615,571.5 Z"/></clipPath><linearGradient id="boreshade" gradientUnits="userSpaceOnUse" x1="619" y1="453.5" x2="606.6" y2="571.5"><stop offset="0" stop-color="#000" stop-opacity="0.62"/><stop offset="0.35" stop-color="#000" stop-opacity="0.3"/><stop offset="0.7" stop-color="#000" stop-opacity="0.02"/><stop offset="1" stop-color="#000" stop-opacity="0"/></linearGradient><clipPath id="bellU"><polygon points="542.0,295.0 558.0,308.0 570.0,320.0 581.0,335.0 590.0,350.0 598.0,370.0 605.0,390.0 609.0,415.0 612.0,440.0 613.0,456.0 625.0,456.0 700.0,400.0 760.0,380.0 790.0,322.0 501.0,291.0"/></clipPath><clipPath id="bellL"><polygon points="613.0,455.0 612.0,470.0 611.0,505.0 607.0,540.0 600.0,570.0 591.0,600.0 580.0,625.0 565.0,650.0 547.0,670.0 528.0,687.0 507.0,700.0 490.0,705.0 475.0,705.0 762.0,734.0 730.0,700.0 712.0,696.0 712.0,655.0 616.0,655.0 616.0,571.0 620.0,455.0"/></clipPath><clipPath id="mfaceU"><polygon points="619.0,376.0 662.0,383.0 662.0,364.0 700.0,366.9 760.0,375.3 820.0,383.7 880.0,392.1 940.0,400.5 1000.0,408.9 1060.0,417.3 1120.0,425.7 1157.0,430.9 1157.0,389.0 1437.0,419.0 1461.0,455.0 1460.0,542.0 619.0,453.5"/></clipPath><clipPath id="mfaceL"><polygon points="615.0,571.5 616.0,664.0 698.0,655.0 698.0,673.0 780.0,664.0 780.0,682.0 863.0,673.0 863.0,690.0 945.0,681.0 945.0,699.0 1027.0,690.0 1027.0,708.0 1032.0,709.0 1109.0,700.0 1109.0,717.5 1191.0,709.0 1191.0,756.0 1424.0,781.0 1452.0,754.0 1455.0,661.8"/></clipPath><clipPath id="regB"><polygon points="474.0,733.0 475.0,705.0 762.0,734.0 730.0,700.0 711.0,695.0 711.0,672.0 1032.0,706.0 1030.0,733.0 1000.0,762.0 1040.0,762.0 1120.0,778.0 1351.0,801.0 1351.0,829.0"/></clipPath><linearGradient id="coneg" gradientUnits="userSpaceOnUse" x1="655" y1="356" x2="748" y2="340"><stop offset="0" stop-color="rgb(0,140,235)"/><stop offset="0.08" stop-color="rgb(0,140,235)"/><stop offset="0.08" stop-color="rgb(0,235,235)"/><stop offset="0.16" stop-color="rgb(0,235,235)"/><stop offset="0.16" stop-color="rgb(0,220,110)"/><stop offset="0.24" stop-color="rgb(0,220,110)"/><stop offset="0.24" stop-color="rgb(0,200,0)"/><stop offset="0.36" stop-color="rgb(0,200,0)"/><stop offset="0.36" stop-color="rgb(110,210,0)"/><stop offset="0.44" stop-color="rgb(110,210,0)"/><stop offset="0.44" stop-color="rgb(220,220,0)"/><stop offset="0.5" stop-color="rgb(220,220,0)"/><stop offset="0.5" stop-color="rgb(235,120,0)"/><stop offset="0.55" stop-color="rgb(235,120,0)"/><stop offset="0.55" stop-color="rgb(222,0,0)"/><stop offset="0.82" stop-color="rgb(222,0,0)"/><stop offset="0.82" stop-color="rgb(235,120,0)"/><stop offset="0.87" stop-color="rgb(235,120,0)"/><stop offset="0.87" stop-color="rgb(220,220,0)"/><stop offset="0.93" stop-color="rgb(220,220,0)"/><stop offset="0.93" stop-color="rgb(0,200,0)"/><stop offset="1" stop-color="rgb(0,200,0)"/></linearGradient><linearGradient id="ut0" gradientUnits="userSpaceOnUse" x1="781" y1="0" x2="830" y2="0"><stop offset="0" stop-color="rgb(230,200,0)"/><stop offset="0.06" stop-color="rgb(225,0,0)"/><stop offset="0.52" stop-color="rgb(225,0,0)"/><stop offset="0.62" stop-color="rgb(240,220,0)"/><stop offset="0.74" stop-color="rgb(0,220,0)"/><stop offset="0.88" stop-color="rgb(0,230,230)"/><stop offset="1" stop-color="rgb(0,120,240)"/></linearGradient><linearGradient id="ut1" gradientUnits="userSpaceOnUse" x1="862" y1="0" x2="911" y2="0"><stop offset="0" stop-color="rgb(230,200,0)"/><stop offset="0.06" stop-color="rgb(225,0,0)"/><stop offset="0.52" stop-color="rgb(225,0,0)"/><stop offset="0.62" stop-color="rgb(240,220,0)"/><stop offset="0.74" stop-color="rgb(0,220,0)"/><stop offset="0.88" stop-color="rgb(0,230,230)"/><stop offset="1" stop-color="rgb(0,120,240)"/></linearGradient><linearGradient id="ut2" gradientUnits="userSpaceOnUse" x1="945" y1="0" x2="994" y2="0"><stop offset="0" stop-color="rgb(230,200,0)"/><stop offset="0.06" stop-color="rgb(225,0,0)"/><stop offset="0.52" stop-color="rgb(225,0,0)"/><stop offset="0.62" stop-color="rgb(240,220,0)"/><stop offset="0.74" stop-color="rgb(0,220,0)"/><stop offset="0.88" stop-color="rgb(0,230,230)"/><stop offset="1" stop-color="rgb(0,120,240)"/></linearGradient><linearGradient id="lt0" gradientUnits="userSpaceOnUse" x1="698" y1="0" x2="780" y2="0"><stop offset="0" stop-color="rgb(0,190,120)"/><stop offset="0.3" stop-color="rgb(0,200,0)"/><stop offset="0.4" stop-color="rgb(120,210,0)"/><stop offset="0.44" stop-color="rgb(230,220,0)"/><stop offset="0.47" stop-color="rgb(225,0,0)"/><stop offset="0.63" stop-color="rgb(225,0,0)"/><stop offset="0.67" stop-color="rgb(230,220,0)"/><stop offset="0.72" stop-color="rgb(0,220,0)"/><stop offset="0.8" stop-color="rgb(0,230,230)"/><stop offset="0.9" stop-color="rgb(0,110,255)"/><stop offset="1" stop-color="rgb(0,60,240)"/></linearGradient><linearGradient id="lt1" gradientUnits="userSpaceOnUse" x1="780" y1="0" x2="862" y2="0"><stop offset="0" stop-color="rgb(0,190,120)"/><stop offset="0.3" stop-color="rgb(0,200,0)"/><stop offset="0.4" stop-color="rgb(120,210,0)"/><stop offset="0.44" stop-color="rgb(230,220,0)"/><stop offset="0.47" stop-color="rgb(225,0,0)"/><stop offset="0.63" stop-color="rgb(225,0,0)"/><stop offset="0.67" stop-color="rgb(230,220,0)"/><stop offset="0.72" stop-color="rgb(0,220,0)"/><stop offset="0.8" stop-color="rgb(0,230,230)"/><stop offset="0.9" stop-color="rgb(0,110,255)"/><stop offset="1" stop-color="rgb(0,60,240)"/></linearGradient><linearGradient id="lt2" gradientUnits="userSpaceOnUse" x1="863" y1="0" x2="945" y2="0"><stop offset="0" stop-color="rgb(0,190,120)"/><stop offset="0.3" stop-color="rgb(0,200,0)"/><stop offset="0.4" stop-color="rgb(120,210,0)"/><stop offset="0.44" stop-color="rgb(230,220,0)"/><stop offset="0.47" stop-color="rgb(225,0,0)"/><stop offset="0.63" stop-color="rgb(225,0,0)"/><stop offset="0.67" stop-color="rgb(230,220,0)"/><stop offset="0.72" stop-color="rgb(0,220,0)"/><stop offset="0.8" stop-color="rgb(0,230,230)"/><stop offset="0.9" stop-color="rgb(0,110,255)"/><stop offset="1" stop-color="rgb(0,60,240)"/></linearGradient><linearGradient id="lt3" gradientUnits="userSpaceOnUse" x1="945" y1="0" x2="1027" y2="0"><stop offset="0" stop-color="rgb(0,190,120)"/><stop offset="0.3" stop-color="rgb(0,200,0)"/><stop offset="0.4" stop-color="rgb(120,210,0)"/><stop offset="0.44" stop-color="rgb(230,220,0)"/><stop offset="0.47" stop-color="rgb(225,0,0)"/><stop offset="0.63" stop-color="rgb(225,0,0)"/><stop offset="0.67" stop-color="rgb(230,220,0)"/><stop offset="0.72" stop-color="rgb(0,220,0)"/><stop offset="0.8" stop-color="rgb(0,230,230)"/><stop offset="0.9" stop-color="rgb(0,110,255)"/><stop offset="1" stop-color="rgb(0,60,240)"/></linearGradient><g id="fx"><path d="M0,0 L-12,-6 Q-16,-1 -12,5 Z" fill="rgb(0,225,0)"/><path d="M0,0 L12,-7 Q16,-3 13,4 Z" fill="rgb(0,225,0)"/><rect x="-21" y="-2.3" width="8" height="3" fill="rgb(0,225,0)"/><ellipse cx="-21.5" cy="-1" rx="4" ry="5.8" fill="rgb(0,225,0)"/><ellipse cx="16.5" cy="-2" rx="4.6" ry="6" fill="rgb(0,225,0)"/><ellipse cx="-22.5" cy="-1" rx="1.8" ry="3.4" fill="rgb(0,170,0)"/><ellipse cx="17.5" cy="-2" rx="2" ry="3.6" fill="rgb(0,170,0)"/><path d="M0,0 L5.6,15 L-5.6,15 Z" fill="rgb(0,225,0)"/><rect x="-1.8" y="14" width="3.6" height="12" fill="rgb(0,225,0)"/><rect x="-5.6" y="24.5" width="11.2" height="3.8" rx="1" fill="rgb(0,225,0)"/></g></defs><use href="#fx" x="503" y="726"/><use href="#fx" x="540" y="272"/><use href="#fx" x="563" y="318"/><use href="#fx" x="590" y="352"/><use href="#fx" x="612" y="452"/><use href="#fx" x="604" y="552"/><use href="#fx" x="580" y="612"/><use href="#fx" x="583" y="624"/><use href="#fx" x="553" y="668"/><use href="#fx" x="492" y="703"/><use href="#fx" x="634" y="385"/><g shape-rendering="crispEdges"><polygon points="1340.0,346.3 1395.0,352.0 1415.0,357.0 1432.0,367.0 1445.0,378.0 1455.0,390.0 1466.0,405.0 1477.0,421.0 1490.0,426.0 1500.0,432.0 1512.0,445.0 1520.0,460.0 1531.0,480.0 1540.0,500.0 1546.0,522.0 1550.0,545.0 1552.0,570.0 1552.0,590.0 1551.0,620.0 1548.0,645.0 1542.0,665.0 1533.0,690.0 1522.0,710.0 1512.0,724.0 1500.0,735.0 1485.0,745.0 1470.0,752.0 1453.0,766.0 1437.0,781.0 1422.0,797.0 1407.0,810.0 1392.0,820.0 1375.0,827.0 1362.0,830.0 1350.0,830.0 1340.0,828.0" fill="rgb(0,0,232)" />
<polygon points="1477.0,421.0 1490.0,426.0 1500.0,432.0 1512.0,445.0 1520.0,460.0 1531.0,480.0 1540.0,500.0 1546.0,522.0 1550.0,545.0 1552.0,570.0 1552.0,590.0 1551.0,620.0 1548.0,645.0 1542.0,665.0 1533.0,690.0 1522.0,710.0 1500.0,735.0 1505.0,700.0 1520.0,660.0 1528.0,620.0 1530.0,570.0 1525.0,520.0 1510.0,470.0 1490.0,440.0" fill="rgb(0,0,214)" />
<polygon points="1452.0,754.0 1502.0,730.0 1485.0,745.0 1470.0,752.0 1453.0,766.0 1437.0,781.0 1424.0,781.0" fill="rgb(0,0,92)" />
<g clip-path="url(#boreclip)">
<polygon points="600.0,440.0 1520.0,440.0 1520.0,680.0 600.0,680.0" fill="rgb(0,120,200)" />
<path d="M613.0,450.9 A24,61.2 0 0 1 612.0,573.3 L1560,673.3 L1560,350.9 Z" fill="rgb(0,190,210)" />
<path d="M637.0,453.4 A24,61.2 0 0 1 636.0,575.9 L1560,675.9 L1560,353.4 Z" fill="rgb(0,0,190)" />
<path d="M666.0,456.4 A24,61.3 0 0 1 665.0,579.0 L1560,679.0 L1560,356.4 Z" fill="rgb(0,50,200)" />
<path d="M687.0,458.7 A24,61.3 0 0 1 686.0,581.2 L1560,681.2 L1560,358.7 Z" fill="rgb(0,120,215)" />
<path d="M743.0,464.5 A24,61.4 0 0 1 742.0,587.3 L1560,687.3 L1560,364.5 Z" fill="rgb(0,235,245)" />
<path d="M766.0,467.0 A24,61.4 0 0 1 765.0,589.7 L1560,689.7 L1560,367.0 Z" fill="rgb(0,240,125)" />
<path d="M786.0,469.1 A24,61.4 0 0 1 785.0,591.9 L1560,691.9 L1560,369.1 Z" fill="rgb(0,215,0)" />
<path d="M858.0,476.6 A24,61.5 0 0 1 857.0,599.6 L1560,699.6 L1560,376.6 Z" fill="rgb(125,240,0)" />
<path d="M1001.0,491.7 A24,61.7 0 0 1 1000.0,615.0 L1560,715.0 L1560,391.7 Z" fill="rgb(0,215,0)" />
<path d="M1026.0,494.3 A24,61.7 0 0 1 1025.0,617.7 L1560,717.7 L1560,394.3 Z" fill="rgb(0,240,125)" />
<path d="M1051.0,496.9 A24,61.7 0 0 1 1050.0,620.4 L1560,720.4 L1560,396.9 Z" fill="rgb(0,235,245)" />
<path d="M1076.0,499.6 A24,61.7 0 0 1 1075.0,623.1 L1560,723.1 L1560,399.6 Z" fill="rgb(0,160,250)" />
<path d="M1171.0,509.6 A24,61.8 0 0 1 1170.0,633.3 L1560,733.3 L1560,409.6 Z" fill="rgb(0,80,240)" />
<path d="M1236.0,516.4 A24,61.9 0 0 1 1235.0,640.3 L1560,740.3 L1560,416.4 Z" fill="rgb(0,160,250)" />
<path d="M1276.0,520.6 A24,62.0 0 0 1 1275.0,644.6 L1560,744.6 L1560,420.6 Z" fill="rgb(0,80,240)" />
<path d="M1346.0,528.0 A24,62.1 0 0 1 1345.0,652.1 L1560,752.1 L1560,428.0 Z" fill="rgb(0,0,190)" />
<ellipse cx="985" cy="546" rx="11" ry="46" fill="rgb(230,235,0)" transform="rotate(-8 985 548)"/>
<polygon points="600.0,440.0 1520.0,440.0 1520.0,680.0 600.0,680.0" fill="url(#boreshade)" />
<path d="M637.0,453.4 A24,61.2 0 0 1 636.0,575.9 L590,575.9 L590,453.4 Z" fill="rgb(0,172,192)" />
<path d="M615.0,451.1 A24,61.2 0 0 1 614.0,573.5 L590,573.5 L590,451.1 Z" fill="rgb(0,112,192)" />
<path d="M599.0,449.4 A24,61.2 0 0 1 598.0,571.8 L590,571.8 L590,449.4 Z" fill="rgb(0,62,205)" />
</g>
<g clip-path="url(#bellU)">
<polygon points="480.0,280.0 800.0,280.0 800.0,480.0 480.0,480.0" fill="rgb(0,22,96)" />
<polygon points="551.0,295.0 567.0,308.0 579.0,320.0 590.0,335.0 599.0,350.0 607.0,370.0 614.0,390.0 618.0,415.0 621.0,440.0 622.0,456.0 900.0,470.0 900.0,280.0 521.0,280.0" fill="rgb(0,40,112)" />
<polygon points="562.0,295.0 578.0,308.0 590.0,320.0 601.0,335.0 610.0,350.0 618.0,370.0 625.0,390.0 629.0,415.0 632.0,440.0 633.0,456.0 900.0,470.0 900.0,280.0 532.0,280.0" fill="rgb(0,58,116)" />
<polygon points="578.0,295.0 594.0,308.0 606.0,320.0 617.0,335.0 626.0,350.0 634.0,370.0 641.0,390.0 645.0,415.0 648.0,440.0 649.0,456.0 900.0,470.0 900.0,280.0 548.0,280.0" fill="rgb(0,72,112)" />
<polygon points="604.0,295.0 620.0,308.0 632.0,320.0 643.0,335.0 652.0,350.0 660.0,370.0 667.0,390.0 671.0,415.0 674.0,440.0 675.0,456.0 900.0,470.0 900.0,280.0 574.0,280.0" fill="rgb(0,84,100)" />
<polygon points="654.0,295.0 670.0,308.0 682.0,320.0 693.0,335.0 702.0,350.0 710.0,370.0 717.0,390.0 721.0,415.0 724.0,440.0 725.0,456.0 900.0,470.0 900.0,280.0 624.0,280.0" fill="rgb(0,92,72)" />
<polygon points="692.0,295.0 708.0,308.0 720.0,320.0 731.0,335.0 740.0,350.0 748.0,370.0 755.0,390.0 759.0,415.0 762.0,440.0 763.0,456.0 900.0,470.0 900.0,280.0 662.0,280.0" fill="rgb(0,96,40)" />
<polygon points="727.0,295.0 743.0,308.0 755.0,320.0 766.0,335.0 775.0,350.0 783.0,370.0 790.0,390.0 794.0,415.0 797.0,440.0 798.0,456.0 900.0,470.0 900.0,280.0 697.0,280.0" fill="rgb(0,100,8)" />
</g>
<g clip-path="url(#bellL)">
<polygon points="470.0,450.0 780.0,450.0 780.0,740.0 470.0,740.0" fill="rgb(0,70,235)" />
<polygon points="617.0,455.4 616.0,470.4 615.0,505.4 611.0,540.4 604.0,570.4 595.0,600.4 584.0,625.4 569.0,649.4 551.0,669.4 532.0,686.4 511.0,699.4 494.0,704.4 479.0,704.4 479.0,760.0 800.0,760.0 800.0,450.0" fill="rgb(0,140,255)" />
<polygon points="627.0,456.4 626.0,471.4 625.0,506.4 621.0,541.4 614.0,571.4 605.0,601.4 594.0,626.4 579.0,647.9 561.0,667.9 542.0,684.9 521.0,697.9 504.0,702.9 489.0,702.9 489.0,760.0 800.0,760.0 800.0,450.0" fill="rgb(0,178,255)" />
<polygon points="640.0,457.7 639.0,472.7 638.0,507.7 634.0,542.7 627.0,572.7 618.0,602.7 607.0,627.7 592.0,646.0 574.0,666.0 555.0,683.0 534.0,696.0 517.0,701.0 502.0,701.0 502.0,760.0 800.0,760.0 800.0,450.0" fill="rgb(0,255,255)" />
<polygon points="640.0,650.0 644.0,677.0 637.0,695.0 625.0,712.0 615.0,720.0 665.0,726.0 690.0,710.0 712.0,696.0 712.0,650.0" fill="rgb(0,255,128)" />
<polygon points="665.0,726.0 690.0,710.0 712.0,696.0 730.0,700.0 762.0,734.0" fill="rgb(0,250,0)" />
</g>
<polygon points="494.0,259.0 790.0,289.5 790.0,321.9 501.0,291.0 490.0,288.0" fill="rgb(0,110,180)" />
<polygon points="494.0,259.0 640.0,274.1 660.0,280.1 497.0,263.0" fill="rgb(0,128,225)" />
<polygon points="572.0,298.6 600.0,293.5 640.0,291.0 690.0,296.0 740.0,300.0 760.0,305.0 770.0,319.7" fill="rgb(0,170,170)" />
<polygon points="640.0,307.0 700.0,308.0 745.0,309.0 768.0,314.0 768.0,319.5 650.0,306.9" fill="rgb(0,170,85)" />
<polygon points="668.0,279.0 745.0,286.9 752.0,292.0 730.0,297.0 700.0,294.0 680.0,289.0" fill="rgb(0,60,180)" />
<polygon points="690.0,282.2 735.0,286.9 738.0,290.0 712.0,291.0" fill="rgb(0,0,190)" />
<polygon points="700.0,280.3 790.0,289.5 790.0,293.5 760.0,291.5 730.0,286.4" fill="rgb(0,150,230)" />
<polygon points="756.0,290.0 764.0,290.9 750.0,317.6 742.0,316.7" fill="rgb(0,170,85)" />
<polygon points="764.0,290.9 770.0,291.5 756.0,318.2 750.0,317.6" fill="rgb(0,170,0)" />
<polygon points="770.0,291.5 775.0,292.0 761.0,318.8 756.0,318.2" fill="rgb(85,170,0)" />
<polygon points="775.0,292.0 780.0,292.5 766.0,319.3 761.0,318.8" fill="rgb(170,170,0)" />
<polygon points="780.0,292.5 785.0,293.0 771.0,319.8 766.0,319.3" fill="rgb(170,85,0)" />
<polygon points="785.0,293.0 808.0,295.4 794.0,322.3 771.0,319.8" fill="rgb(170,0,0)" />
<polygon points="782.0,288.7 1372.0,349.6 1372.0,384.0 1085.0,353.4 1085.0,420.8 746.0,373.3 739.0,346.0 782.0,321.0" fill="rgb(0,170,170)" />
<polygon points="1072.0,318.6 1372.0,349.6 1372.0,384.0 1085.0,353.4 1062.0,351.0 1050.0,340.0" fill="rgb(0,110,180)" />
<polygon points="1100.0,321.5 1372.0,349.6 1372.0,384.0 1125.0,357.6 1090.0,345.0" fill="rgb(0,60,180)" />
<polygon points="1128.0,324.4 1372.0,349.6 1372.0,384.0 1160.0,361.4 1140.0,350.0 1118.0,338.0" fill="rgb(0,0,170)" />
<polygon points="1140.0,325.7 1395.0,352.0 1372.0,356.0 1150.0,331.7" fill="rgb(0,0,225)" />
<polygon points="1367.0,349.1 1395.0,352.0 1415.0,357.0 1432.0,367.0 1445.0,378.0 1440.0,392.0 1420.0,388.0 1367.0,383.5" fill="rgb(0,0,230)" />
<polygon points="1030.0,314.3 1075.0,319.0 1062.0,351.0 1040.0,349.0 1022.0,350.0" fill="rgb(0,170,85)" />
<polygon points="1040.0,318.3 1062.0,320.6 1056.0,349.0 1040.0,347.0" fill="rgb(0,170,0)" />
<polygon points="782.0,288.7 1035.0,314.8 1035.0,317.8 782.0,291.7" fill="rgb(0,110,230)" />
<polygon points="782.0,291.7 1035.0,317.8 1035.0,320.8 782.0,294.7" fill="rgb(0,200,200)" />
<polygon points="782.0,294.7 1035.0,320.8 1035.0,323.8 782.0,297.7" fill="rgb(0,170,85)" />
<polygon points="782.0,297.7 1035.0,323.8 1035.0,326.8 782.0,300.7" fill="rgb(0,170,0)" />
<polygon points="782.0,300.7 1035.0,326.8 1035.0,329.8 782.0,303.7" fill="rgb(170,170,0)" />
<polygon points="782.0,303.7 1035.0,329.8 1035.0,332.8 782.0,306.7" fill="rgb(170,85,0)" />
<polygon points="790.0,308.5 1015.0,329.8 1030.0,344.0 1018.0,352.0 1000.0,353.0 785.0,326.0" fill="rgb(0,170,0)" stroke="rgb(0,170,0)" stroke-width="16" stroke-linejoin="round"/>
<polygon points="790.0,308.5 1015.0,329.8 1030.0,344.0 1018.0,352.0 1000.0,353.0 785.0,326.0" fill="rgb(85,170,0)" stroke="rgb(85,170,0)" stroke-width="11" stroke-linejoin="round"/>
<polygon points="790.0,308.5 1015.0,329.8 1030.0,344.0 1018.0,352.0 1000.0,353.0 785.0,326.0" fill="rgb(170,170,0)" stroke="rgb(170,170,0)" stroke-width="7" stroke-linejoin="round"/>
<polygon points="790.0,308.5 1015.0,329.8 1030.0,344.0 1018.0,352.0 1000.0,353.0 785.0,326.0" fill="rgb(170,85,0)" stroke="rgb(170,85,0)" stroke-width="3.5" stroke-linejoin="round"/>
<polygon points="790.0,308.5 1015.0,329.8 1030.0,344.0 1018.0,352.0 1000.0,353.0 785.0,326.0" fill="rgb(170,0,0)"/>
<polygon points="775.0,345.4 787.0,345.1 791.0,379.6 779.0,377.9" fill="rgb(0,170,85)" />
<polygon points="779.0,355.4 785.0,357.1 788.0,379.6 782.0,377.9" fill="rgb(0,170,0)" />
<polygon points="850.0,355.9 862.0,355.6 866.0,390.1 854.0,388.4" fill="rgb(0,170,85)" />
<polygon points="854.0,365.9 860.0,367.6 863.0,390.1 857.0,388.4" fill="rgb(0,170,0)" />
<polygon points="935.0,367.8 947.0,367.5 951.0,402.0 939.0,400.3" fill="rgb(0,170,85)" />
<polygon points="939.0,377.8 945.0,379.5 948.0,402.0 942.0,400.3" fill="rgb(0,170,0)" />
<polygon points="1010.0,378.3 1022.0,378.0 1026.0,412.5 1014.0,410.8" fill="rgb(0,170,85)" />
<polygon points="1014.0,388.3 1020.0,390.0 1023.0,412.5 1017.0,410.8" fill="rgb(0,170,0)" />
<ellipse cx="812" cy="361" rx="27" ry="15" fill="rgb(0,110,180)" transform="rotate(12 812 361)"/>
<ellipse cx="812" cy="361" rx="20" ry="9" fill="rgb(0,60,180)" transform="rotate(12 812 361)"/>
<ellipse cx="810" cy="362" rx="9.0" ry="4.0" fill="rgb(0,0,170)" transform="rotate(12 812 361)"/>
<ellipse cx="893" cy="366" rx="26" ry="16" fill="rgb(0,110,180)" transform="rotate(12 893 366)"/>
<ellipse cx="893" cy="366" rx="19" ry="10" fill="rgb(0,60,180)" transform="rotate(12 893 366)"/>
<ellipse cx="891" cy="367" rx="8.6" ry="4.5" fill="rgb(0,0,170)" transform="rotate(12 893 366)"/>
<ellipse cx="975" cy="372" rx="22" ry="15" fill="rgb(0,110,180)" transform="rotate(12 975 372)"/>
<ellipse cx="975" cy="372" rx="15" ry="9" fill="rgb(0,60,180)" transform="rotate(12 975 372)"/>
<ellipse cx="973" cy="373" rx="6.8" ry="4.0" fill="rgb(0,0,170)" transform="rotate(12 975 372)"/>
<ellipse cx="765" cy="350" rx="15" ry="11" fill="rgb(0,110,180)" transform="rotate(12 765 350)"/>
<ellipse cx="765" cy="350" rx="8" ry="5" fill="rgb(0,60,180)" transform="rotate(12 765 350)"/>
<ellipse cx="763" cy="351" rx="3.6" ry="2.2" fill="rgb(0,0,170)" transform="rotate(12 765 350)"/>
<polygon points="1085.0,353.4 1372.0,384.0 1400.0,388.0 1425.0,398.0 1440.0,410.0 1447.0,416.0 1157.0,389.0 1157.0,430.0 1085.0,420.0" fill="rgb(0,0,88)" />
<polygon points="1150.0,360.3 1225.0,368.3 1215.0,392.0 1157.0,388.0" fill="rgb(0,28,104)" />
<polygon points="1120.0,357.1 1185.0,364.1 1178.0,390.0 1157.0,388.0 1157.0,376.0" fill="rgb(0,52,112)" />
<polygon points="1015.0,350.0 1157.5,387.0 1157.5,438.0 1035.0,416.0" fill="rgb(0,0,190)" />
<polygon points="1066.0,352.4 1080.0,354.0 1131.0,419.8 1121.5,418.0 1104.0,394.0" fill="rgb(112,0,0)" />
<polygon points="1080.0,354.0 1083.5,354.3 1135.5,420.6 1131.0,419.8" fill="rgb(118,45,0)" />
<polygon points="1083.5,354.3 1087.0,354.7 1140.0,421.5 1135.5,420.6" fill="rgb(100,92,0)" />
<polygon points="1087.0,354.7 1093.0,355.3 1151.5,423.7 1140.0,421.5" fill="rgb(0,92,0)" />
<polygon points="1093.0,355.3 1104.0,356.5 1157.5,401.0 1157.5,424.9 1151.5,423.7" fill="rgb(0,84,56)" />
<polygon points="1104.0,356.5 1124.0,358.6 1190.0,392.0 1157.5,388.7 1157.5,401.0" fill="rgb(0,70,92)" />
<polygon points="1124.0,358.6 1152.0,361.6 1228.0,395.5 1190.0,392.0" fill="rgb(0,48,98)" />
<polygon points="1074.0,409.0 1157.5,424.9 1157.5,438.0 1120.0,430.0 1074.0,419.0" fill="rgb(0,40,215)" />
<polygon points="1100.0,417.0 1157.5,428.0 1157.5,438.0 1120.0,431.0" fill="rgb(0,140,255)" />
<polygon points="1017.0,350.0 1030.0,348.0 1064.0,352.0 1104.0,394.0 1122.0,414.0 1121.0,418.0 1074.0,409.0 1035.0,411.0 1026.0,385.0" fill="rgb(0,0,222)" />
<polygon points="1014.9,358.8 1037.8,359.8 1058.8,365.8 1076.8,381.8 1097.8,404.8 1113.8,423.8 1121.0,414.0 1105.0,395.0 1084.0,372.0 1066.0,356.0 1045.0,350.0 1022.0,349.0" fill="rgb(0,60,240)"/>
<polygon points="1016.5,356.5 1039.5,357.5 1060.5,363.5 1078.5,379.5 1099.5,402.5 1115.5,421.5 1121.0,414.0 1105.0,395.0 1084.0,372.0 1066.0,356.0 1045.0,350.0 1022.0,349.0" fill="rgb(0,170,255)"/>
<polygon points="1017.9,354.6 1040.9,355.6 1061.9,361.6 1079.9,377.6 1100.9,400.6 1116.9,419.6 1121.0,414.0 1105.0,395.0 1084.0,372.0 1066.0,356.0 1045.0,350.0 1022.0,349.0" fill="rgb(0,255,200)"/>
<polygon points="1019.0,353.1 1042.0,354.1 1063.0,360.1 1081.0,376.1 1102.0,399.1 1118.0,418.1 1121.0,414.0 1105.0,395.0 1084.0,372.0 1066.0,356.0 1045.0,350.0 1022.0,349.0" fill="rgb(0,230,0)"/>
<polygon points="1020.1,351.6 1043.1,352.6 1064.1,358.6 1082.1,374.6 1103.1,397.6 1119.1,416.6 1121.0,414.0 1105.0,395.0 1084.0,372.0 1066.0,356.0 1045.0,350.0 1022.0,349.0" fill="rgb(255,255,0)"/>
<polygon points="1021.0,350.4 1044.0,351.4 1065.0,357.4 1083.0,373.4 1104.0,396.4 1120.0,415.4 1121.0,414.0 1105.0,395.0 1084.0,372.0 1066.0,356.0 1045.0,350.0 1022.0,349.0" fill="rgb(230,0,0)"/>
<polygon points="1040.0,390.0 1075.0,386.0 1100.0,398.0 1116.0,414.0 1074.0,408.0 1045.0,408.0" fill="rgb(0,0,160)" />
<g clip-path="url(#mfaceU)">
<polygon points="600.0,350.0 1480.0,350.0 1480.0,560.0 600.0,560.0" fill="rgb(0,170,85)" />
<polygon points="600.0,355.0 657.0,355.0 650.0,470.0 600.0,470.0" fill="rgb(0,0,170)" />
<polygon points="657.0,355.0 735.0,355.0 680.0,470.0 650.0,470.0" fill="rgb(0,60,180)" />
<polygon points="735.0,355.0 752.0,355.0 708.0,470.0 680.0,470.0" fill="rgb(0,110,180)" />
<polygon points="752.0,355.0 790.0,355.0 740.0,470.0 708.0,470.0" fill="rgb(0,170,170)" />
<polygon points="740.0,372.5 1040.0,414.5 1040.0,442.5 960.0,433.3 900.0,416.9 840.0,416.5 790.0,405.5 740.0,417.5" fill="rgb(0,170,170)" />
<ellipse cx="800" cy="412.9" rx="13.0" ry="26.0" fill="rgb(0,170,170)" transform="rotate(8 800 406.9)"/>
<ellipse cx="868" cy="426.4" rx="11.0" ry="30.0" fill="rgb(0,170,170)" transform="rotate(8 868 420.4)"/>
<ellipse cx="948" cy="435.6" rx="11.0" ry="28.0" fill="rgb(0,170,170)" transform="rotate(8 948 429.6)"/>
<ellipse cx="1010" cy="436.3" rx="9.0" ry="20.0" fill="rgb(0,170,170)" transform="rotate(8 1010 430.3)"/>
<ellipse cx="797" cy="394.5" rx="6" ry="8" fill="rgb(0,110,180)"/>
<polygon points="775.0,377.4 785.0,378.8 789.0,469.9 779.0,469.9" fill="rgb(0,170,0)" />
<polygon points="830.0,385.1 842.0,386.8 846.0,475.7 834.0,475.7" fill="rgb(0,170,0)" />
<polygon points="905.0,395.6 943.0,400.9 947.0,483.6 909.0,483.6" fill="rgb(0,170,0)" />
<polygon points="985.0,406.8 997.0,408.5 1001.0,492.0 989.0,492.0" fill="rgb(0,170,0)" />
<ellipse cx="868" cy="424.4" rx="10.0" ry="26.0" fill="rgb(0,170,170)" transform="rotate(8 868 416.4)"/>
<ellipse cx="948" cy="434.6" rx="9.0" ry="25.0" fill="rgb(0,170,170)" transform="rotate(8 948 426.6)"/>
<polygon points="1018.0,400.0 1045.0,400.0 1040.0,560.0 1020.0,560.0" fill="rgb(0,170,170)" />
<polygon points="1035.0,400.0 1480.0,400.0 1480.0,560.0 1038.0,560.0" fill="rgb(0,110,180)" />
<polygon points="1157.0,380.0 1480.0,380.0 1480.0,560.0 1110.0,560.0 1115.0,500.0 1135.0,480.0 1150.0,455.0 1165.0,445.0 1157.0,430.0" fill="rgb(0,60,180)" />
<polygon points="1160.0,440.0 1185.0,420.0 1230.0,430.0 1255.0,448.0 1258.0,455.0 1240.0,455.0 1200.0,440.0 1178.0,450.0" fill="rgb(0,110,180)" />
<polygon points="1345.0,400.0 1480.0,400.0 1480.0,560.0 1320.0,560.0 1322.0,500.0 1334.0,460.0 1332.0,425.0" fill="rgb(0,0,170)" />
</g>
<polygon points="1157.0,389.0 1437.0,419.0 1445.0,415.0 1165.0,385.0" fill="rgb(0,30,235)" />
<polygon points="622.0,369.0 645.0,366.0 662.0,372.0 662.0,383.0 619.0,376.0" fill="rgb(0,0,250)" />
<g clip-path="url(#regB)">
<polygon points="460.0,650.0 1360.0,650.0 1360.0,840.0 460.0,840.0" fill="rgb(0,170,170)" />
<polygon points="460.0,690.0 515.0,700.0 560.0,716.0 628.0,754.0 460.0,760.0" fill="rgb(0,110,180)" />
<polygon points="474.0,705.0 520.0,709.0 500.0,722.0 476.0,730.0" fill="rgb(0,120,200)" />
<polygon points="690.0,722.0 770.0,735.0 775.0,766.2 735.0,761.8 700.0,745.0" fill="rgb(0,170,85)" />
<polygon points="625.0,739.6 700.0,735.9 735.0,747.8 745.0,762.9 610.0,748.0" fill="rgb(0,110,180)" />
<polygon points="645.0,745.8 700.0,742.9 725.0,752.7 730.0,761.2 640.0,751.3" fill="rgb(0,60,180)" />
<polygon points="752.0,733.3 762.0,734.3 748.0,763.2 738.0,762.1" fill="rgb(0,170,85)" />
<polygon points="762.0,734.3 768.0,734.9 754.0,763.9 748.0,763.2" fill="rgb(0,170,0)" />
<polygon points="768.0,734.9 773.0,735.4 759.0,764.4 754.0,763.9" fill="rgb(85,170,0)" />
<polygon points="773.0,735.4 778.0,735.9 764.0,765.0 759.0,764.4" fill="rgb(170,170,0)" />
<polygon points="778.0,735.9 783.0,736.4 769.0,765.5 764.0,765.0" fill="rgb(170,85,0)" />
<polygon points="765.0,734.0 1030.0,760.0 1040.0,795.4 765.0,765.1" fill="rgb(0,170,85)" />
<polygon points="765.0,759.1 1020.0,787.2 1020.0,793.2 765.0,765.1" fill="rgb(0,170,0)" />
<polygon points="734.0,670.4 750.0,672.1 756.0,742.5 736.0,742.5" fill="rgb(0,170,85)" />
<polygon points="739.0,670.4 746.0,672.1 749.0,737.5 741.0,737.5" fill="rgb(0,170,0)" />
<polygon points="818.0,679.1 834.0,680.8 840.0,750.0 820.0,750.0" fill="rgb(0,170,85)" />
<polygon points="823.0,679.1 830.0,680.8 833.0,745.0 825.0,745.0" fill="rgb(0,170,0)" />
<polygon points="899.0,687.6 915.0,689.2 921.0,757.3 901.0,757.3" fill="rgb(0,170,85)" />
<polygon points="904.0,687.6 911.0,689.2 914.0,752.3 906.0,752.3" fill="rgb(0,170,0)" />
<polygon points="981.0,696.1 997.0,697.7 1003.0,764.7 983.0,764.7" fill="rgb(0,170,85)" />
<polygon points="986.0,696.1 993.0,697.7 996.0,759.7 988.0,759.7" fill="rgb(0,170,0)" />
<ellipse cx="764" cy="700" rx="20" ry="16" fill="rgb(0,110,180)" transform="rotate(10 764 700)"/>
<ellipse cx="764" cy="700" rx="13" ry="10" fill="rgb(0,60,180)" transform="rotate(10 764 700)"/>
<ellipse cx="764" cy="699" rx="5.2" ry="4.0" fill="rgb(0,0,170)" transform="rotate(10 764 700)"/>
<ellipse cx="848" cy="714" rx="26" ry="20" fill="rgb(0,110,180)" transform="rotate(10 848 714)"/>
<ellipse cx="848" cy="714" rx="19" ry="14" fill="rgb(0,60,180)" transform="rotate(10 848 714)"/>
<ellipse cx="848" cy="713" rx="7.6" ry="5.6" fill="rgb(0,0,170)" transform="rotate(10 848 714)"/>
<ellipse cx="930" cy="722" rx="26" ry="20" fill="rgb(0,110,180)" transform="rotate(10 930 722)"/>
<ellipse cx="930" cy="722" rx="19" ry="14" fill="rgb(0,60,180)" transform="rotate(10 930 722)"/>
<ellipse cx="930" cy="721" rx="7.6" ry="5.6" fill="rgb(0,0,170)" transform="rotate(10 930 722)"/>
<ellipse cx="1007" cy="732" rx="19" ry="15" fill="rgb(0,110,180)" transform="rotate(10 1007 732)"/>
<ellipse cx="1007" cy="732" rx="12" ry="9" fill="rgb(0,60,180)" transform="rotate(10 1007 732)"/>
<ellipse cx="1007" cy="731" rx="4.8" ry="3.6" fill="rgb(0,0,170)" transform="rotate(10 1007 732)"/>
<polygon points="770.0,741.0 1000.0,759.0 1006.0,767.0 1000.0,773.0 780.0,760.0" fill="rgb(0,170,0)" stroke="rgb(0,170,0)" stroke-width="17" stroke-linejoin="round"/>
<polygon points="770.0,741.0 1000.0,759.0 1006.0,767.0 1000.0,773.0 780.0,760.0" fill="rgb(85,170,0)" stroke="rgb(85,170,0)" stroke-width="12" stroke-linejoin="round"/>
<polygon points="770.0,741.0 1000.0,759.0 1006.0,767.0 1000.0,773.0 780.0,760.0" fill="rgb(170,170,0)" stroke="rgb(170,170,0)" stroke-width="8" stroke-linejoin="round"/>
<polygon points="770.0,741.0 1000.0,759.0 1006.0,767.0 1000.0,773.0 780.0,760.0" fill="rgb(170,85,0)" stroke="rgb(170,85,0)" stroke-width="4" stroke-linejoin="round"/>
<polygon points="770.0,741.0 1000.0,759.0 1006.0,767.0 1000.0,773.0 780.0,760.0" fill="rgb(170,0,0)"/>
<polygon points="1030.0,745.0 1060.0,770.0 1075.0,799.2 1360.0,840.0 1360.0,760.0 1040.0,740.0" fill="rgb(0,110,180)" />
<polygon points="1048.0,775.0 1075.0,782.0 1095.0,801.4 1360.0,840.0 1360.0,770.0" fill="rgb(0,60,180)" />
<polygon points="1070.0,790.0 1100.0,786.0 1120.0,778.0 1360.0,800.0 1360.0,840.0 1110.0,803.1" fill="rgb(0,0,170)" />
</g>
<polygon points="1191.0,756.0 1424.0,781.0 1410.0,795.0 1385.0,800.0 1351.0,801.0 1120.0,778.0" fill="rgb(0,0,240)" />
<g clip-path="url(#mfaceL)">
<polygon points="600.0,560.0 1470.0,560.0 1470.0,800.0 600.0,800.0" fill="rgb(0,170,85)" />
<polygon points="600.0,565.0 655.0,565.0 690.0,700.0 600.0,700.0" fill="rgb(0,0,170)" />
<polygon points="655.0,565.0 690.0,565.0 712.0,700.0 690.0,700.0" fill="rgb(0,60,180)" />
<polygon points="690.0,565.0 735.0,565.0 742.0,700.0 712.0,700.0" fill="rgb(0,110,180)" />
<polygon points="735.0,565.0 768.0,565.0 765.0,700.0 742.0,700.0" fill="rgb(0,170,170)" />
<polygon points="790.0,590.3 1000.0,612.9 990.0,660.0 960.0,690.0 930.0,650.0 900.0,640.0 870.0,660.0 850.0,640.0 800.0,640.0" fill="rgb(0,170,0)" />
<ellipse cx="790" cy="655" rx="17" ry="22" fill="rgb(0,170,170)" transform="rotate(8 790 655)"/>
<ellipse cx="875" cy="665" rx="17" ry="22" fill="rgb(0,170,170)" transform="rotate(8 875 665)"/>
<ellipse cx="958" cy="672" rx="17" ry="22" fill="rgb(0,170,170)" transform="rotate(8 958 672)"/>
<polygon points="1000.0,612.9 1040.0,617.2 1065.0,660.0 1040.0,700.0 1030.0,720.0 990.0,720.0 985.0,680.0 1005.0,640.0" fill="rgb(0,170,170)" />
<polygon points="1028.0,615.9 1470.0,663.4 1470.0,800.0 1040.0,800.0 1035.0,700.0 1060.0,670.0 1050.0,640.0" fill="rgb(0,110,180)" />
<polygon points="1165.0,630.6 1470.0,663.4 1470.0,800.0 1185.0,800.0 1195.0,720.0 1180.0,690.0 1185.0,660.0" fill="rgb(0,60,180)" />
<polygon points="1072.0,690.0 1085.0,680.0 1100.0,684.0 1110.0,678.0 1122.0,685.0 1128.0,700.0 1110.0,706.0 1075.0,704.0" fill="rgb(0,170,170)" />
<polygon points="1160.0,690.0 1185.0,680.0 1205.0,678.0 1225.0,690.0 1240.0,700.0 1235.0,715.0 1200.0,722.0 1190.0,712.0 1175.0,702.0" fill="rgb(0,110,180)" />
<polygon points="1162.0,688.0 1178.0,682.0 1192.0,705.0 1185.0,712.0" fill="rgb(0,170,170)" />
<polygon points="1328.0,648.1 1470.0,663.4 1470.0,800.0 1320.0,800.0 1333.0,740.0 1330.0,690.0" fill="rgb(0,0,170)" />
</g>
<polygon points="659.0,342.5 668.0,340.0 740.0,346.7 746.0,375.3 707.0,368.9 658.0,362.0" fill="url(#coneg)" />
<polygon points="659.0,342.5 668.0,340.0 700.0,343.0 690.0,346.0 662.0,346.0" fill="rgb(0,220,240)" />
<polygon points="781.0,362.2 825.0,378.4 831.0,385.2 781.0,379.2" fill="url(#ut0)" />
<polygon points="862.0,373.6 906.0,389.7 912.0,396.6 862.0,390.6" fill="url(#ut1)" />
<polygon points="945.0,385.2 989.0,401.3 995.0,408.2 945.0,402.2" fill="url(#ut2)" />
<polygon points="703.0,367.3 746.0,373.3 746.0,388.3 716.0,375.1" fill="rgb(0,150,255)" />
<polygon points="784.0,378.6 827.0,384.7 827.0,399.7 797.0,386.5" fill="rgb(0,255,255)" />
<polygon points="867.0,390.3 910.0,396.3 910.0,411.3 880.0,398.1" fill="rgb(0,255,170)" />
<polygon points="949.0,401.7 992.0,407.8 992.0,422.8 962.0,409.6" fill="rgb(0,255,128)" />
<polygon points="1031.0,413.2 1074.0,419.2 1074.0,434.2 1044.0,421.0" fill="rgb(0,255,255)" />
<polygon points="1113.0,424.7 1156.0,430.7 1156.0,445.7 1126.0,432.5" fill="rgb(0,200,255)" />
<polygon points="698.0,365.6 745.0,372.2 745.0,377.2 715.0,371.0" fill="rgb(0,70,255)" />
<line x1="746" y1="373.3" x2="1035" y2="413.8" stroke="rgb(0,255,220)" stroke-width="1" stroke-dasharray="1.5,2"/>
<polygon points="647.0,661.0 698.0,655.0 698.0,673.0 711.0,674.0 711.0,696.0 647.0,688.0" fill="rgb(222,0,0)" />
<polygon points="670.0,660.0 698.0,655.0 698.0,664.0 672.0,678.0" fill="rgb(0,240,120)" />
<polygon points="672.0,678.0 698.0,664.0 698.0,672.0 690.0,674.0" fill="rgb(240,30,0)" />
<polygon points="650.0,680.0 664.0,676.0 680.0,684.0 690.0,692.0 660.0,689.0 649.0,687.0" fill="rgb(150,190,0)" />
<polygon points="647.0,676.0 672.0,678.0 711.0,686.0 711.0,696.0 647.0,688.0" fill="rgb(200,60,0)" />
<polygon points="655.0,681.0 668.0,679.0 682.0,687.0 664.0,688.0" fill="rgb(150,200,0)" />
<polygon points="698.0,673.0 780.0,664.0 780.0,681.0 735.0,688.0 731.0,674.0" fill="url(#lt0)" />
<polygon points="780.0,682.0 862.0,673.0 862.0,690.0 817.0,697.0 813.0,683.0" fill="url(#lt1)" />
<polygon points="863.0,690.0 945.0,681.0 945.0,698.0 900.0,705.0 896.0,691.0" fill="url(#lt2)" />
<polygon points="945.0,699.0 1027.0,690.0 1027.0,707.0 982.0,714.0 978.0,700.0" fill="url(#lt3)" />
<polygon points="1032.0,709.0 1109.0,700.0 1109.0,717.0 1062.0,741.0 1040.0,760.0 1000.0,762.0 1030.0,732.0" fill="rgb(0,0,228)" />
<polygon points="1036.0,714.0 1075.0,709.0 1078.0,722.0 1040.0,728.0" fill="rgb(0,50,240)" />
<polygon points="1030.0,733.0 1064.0,728.0 1040.0,754.0 1003.0,760.0" fill="rgb(0,80,30)" />
<polygon points="1036.0,735.0 1058.0,732.0 1040.0,750.0 1015.0,756.0" fill="rgb(0,130,60)" />
<polygon points="1109.0,717.0 1191.0,709.0 1191.0,756.0 1120.0,778.0 1040.0,762.0 1020.0,760.0 1062.0,735.0" fill="rgb(0,170,255)" />
<polygon points="1150.0,745.0 1191.0,722.0 1191.0,756.0 1120.0,778.0 1100.0,774.0" fill="rgb(0,80,255)" />
<polygon points="1120.0,735.0 1191.0,712.0 1191.0,728.0 1150.0,748.0 1100.0,774.0 1070.0,768.0" fill="rgb(0,130,255)" />
<polygon points="1119.8,715.3 1072.8,748.3 1040.8,770.3 1021.0,770.1 1005.4,764.7 1009.0,766.5 1027.0,775.5 1048.0,780.5 1080.0,758.5 1127.0,725.5" fill="rgb(0,240,240)" />
<polygon points="1117.1,711.5 1070.1,744.5 1038.1,766.5 1018.8,768.1 1004.0,764.0 1005.4,764.7 1021.0,770.1 1040.8,770.3 1072.8,748.3 1119.8,715.3" fill="rgb(0,240,130)" />
<polygon points="1115.3,708.9 1068.3,741.9 1036.3,763.9 1017.2,766.7 1003.1,763.6 1004.0,764.0 1018.8,768.1 1038.1,766.5 1070.1,744.5 1117.1,711.5" fill="rgb(0,225,0)" />
<polygon points="1113.8,706.8 1066.8,739.8 1034.8,761.8 1016.0,765.6 1002.4,763.2 1003.1,763.6 1017.2,766.7 1036.3,763.9 1068.3,741.9 1115.3,708.9" fill="rgb(120,240,0)" />
<polygon points="1112.3,704.7 1065.3,737.7 1033.3,759.7 1014.8,764.5 1001.6,762.8 1002.4,763.2 1016.0,765.6 1034.8,761.8 1066.8,739.8 1113.8,706.8" fill="rgb(255,235,0)" />
<polygon points="1110.8,702.5 1063.8,735.5 1031.8,757.5 1013.5,763.4 1000.9,762.5 1001.6,762.8 1014.8,764.5 1033.3,759.7 1065.3,737.7 1112.3,704.7" fill="rgb(255,120,0)" />
<polygon points="1109.0,700.0 1062.0,733.0 1030.0,755.0 1012.0,762.0 1000.0,762.0 1000.9,762.5 1013.5,763.4 1031.8,757.5 1063.8,735.5 1110.8,702.5" fill="rgb(225,0,0)" />
<line x1="1032" y1="709" x2="1109" y2="700" stroke="rgb(0,50,40)" stroke-width="1"/>
<line x1="1109" y1="717.5" x2="1191" y2="709" stroke="rgb(0,50,40)" stroke-width="1"/></g><line x1="1101.3" y1="519.7" x2="1132.1" y2="523.4" stroke="rgb(255,140,0)" stroke-width="2.4"/>
<polygon points="1145.0,525.0 1131.4,528.9 1132.8,518.0" fill="rgb(255,140,0)" />
<polygon points="1145.0,525.0 1131.4,528.9 1132.0,524.4" fill="rgb(200,100,0)" />
<line x1="1160.3" y1="526.2" x2="1191.1" y2="529.9" stroke="rgb(255,140,0)" stroke-width="2.4"/>
<polygon points="1204.0,531.5 1190.4,535.4 1191.8,524.5" fill="rgb(255,140,0)" />
<polygon points="1204.0,531.5 1190.4,535.4 1191.0,530.9" fill="rgb(200,100,0)" />
<line x1="1219.3" y1="532.7" x2="1250.1" y2="536.4" stroke="rgb(255,140,0)" stroke-width="2.4"/>
<polygon points="1263.0,538.0 1249.4,541.9 1250.8,531.0" fill="rgb(255,140,0)" />
<polygon points="1263.0,538.0 1249.4,541.9 1250.0,537.4" fill="rgb(200,100,0)" />
<line x1="1278.3" y1="539.2" x2="1309.1" y2="542.9" stroke="rgb(255,140,0)" stroke-width="2.4"/>
<polygon points="1322.0,544.5 1308.4,548.4 1309.8,537.5" fill="rgb(255,140,0)" />
<polygon points="1322.0,544.5 1308.4,548.4 1309.0,543.9" fill="rgb(200,100,0)" />
<line x1="1167" y1="384.3" x2="1200" y2="388.0" stroke="rgb(255,140,0)" stroke-width="1.2"/>
<polygon points="1208.0,389.0 1195.0,388.0 1201.0,382.5" fill="rgb(255,140,0)" />
<line x1="1227" y1="390.8" x2="1260" y2="394.5" stroke="rgb(255,140,0)" stroke-width="1.2"/>
<polygon points="1268.0,395.5 1255.0,394.5 1261.0,389.0" fill="rgb(255,140,0)" />
<line x1="1287" y1="397.3" x2="1320" y2="401.0" stroke="rgb(255,140,0)" stroke-width="1.2"/>
<polygon points="1328.0,402.0 1315.0,401.0 1321.0,395.5" fill="rgb(255,140,0)" />
<line x1="1345" y1="403.3" x2="1378" y2="407.0" stroke="rgb(255,140,0)" stroke-width="1.2"/>
<polygon points="1386.0,408.0 1373.0,407.0 1379.0,401.5" fill="rgb(255,140,0)" />
<line x1="1405" y1="409.8" x2="1438" y2="413.5" stroke="rgb(255,140,0)" stroke-width="1.2"/>
<polygon points="1446.0,414.5 1433.0,413.5 1439.0,408.0" fill="rgb(255,140,0)" />
<polygon points="1222.0,762.0 1234.0,763.5 1226.0,768.0" fill="rgb(200,100,0)" />
<polygon points="1281.0,768.0 1293.0,769.5 1285.0,774.0" fill="rgb(200,100,0)" />
<polygon points="1340.0,775.0 1352.0,776.5 1344.0,781.0" fill="rgb(200,100,0)" />
<polygon points="1399.0,782.0 1411.0,783.5 1403.0,788.0" fill="rgb(200,100,0)" />
<g><line x1="322.5" y1="987" x2="322.5" y2="962" stroke="rgb(0,200,0)" stroke-width="2.6"/><path d="M322.5,956 L326.5,966 L318.5,966 Z" fill="rgb(0,200,0)"/><line x1="323" y1="987.5" x2="340" y2="989" stroke="rgb(180,0,0)" stroke-width="2.6"/><path d="M347,989.5 L338,985.5 L338,993 Z" fill="rgb(180,0,0)"/><line x1="322" y1="987.5" x2="310" y2="988.5" stroke="rgb(0,0,180)" stroke-width="2.6"/><path d="M303,989 L311,985 L312,993 Z" fill="rgb(0,0,180)"/><circle cx="322.5" cy="987.5" r="2.5" fill="rgb(0,0,150)"/></g><use href="#fx" x="482" y="265"/><use href="#fx" x="482" y="289"/><use href="#fx" x="423" y="319"/><use href="#fx" x="388" y="369"/><use href="#fx" x="400" y="383"/><use href="#fx" x="372" y="440"/><use href="#fx" x="360" y="546"/><use href="#fx" x="374" y="543"/><use href="#fx" x="380" y="637"/><use href="#fx" x="415" y="674"/><use href="#fx" x="405" y="695"/><use href="#fx" x="443" y="714"/></svg>
<span class="t " style="left:143.0px;top:12.8px;font-size:12px;letter-spacing:-0.46px;">File</span>
<span class="t " style="left:177.5px;top:12.8px;font-size:12px;letter-spacing:-0.29px;">Edit</span>
<span class="t " style="left:213.0px;top:12.8px;font-size:12px;letter-spacing:-0.20px;">View</span>
<span class="t " style="left:254.0px;top:12.8px;font-size:12px;letter-spacing:-0.25px;">Insert</span>
<span class="t " style="left:299.0px;top:12.8px;font-size:12px;letter-spacing:-0.50px;">Tools</span>
<span class="t " style="left:341.5px;top:12.8px;font-size:12px;letter-spacing:-0.20px;">Simulation</span>
<span class="t " style="left:412.0px;top:12.8px;font-size:12px;letter-spacing:0.22px;">Window</span>
<span class="t " style="left:11.0px;top:62.3px;font-size:12px;letter-spacing:-0.34px;">New</span>
<span class="t " style="left:8.0px;top:75.3px;font-size:12px;letter-spacing:-0.34px;">Study</span>
<span class="t " style="left:56.5px;top:62.3px;font-size:12px;letter-spacing:-0.20px;">Apply</span>
<span class="t " style="left:50.0px;top:75.3px;font-size:12px;letter-spacing:-0.08px;">Material</span>
<span class="t " style="left:102.2px;top:62.3px;font-size:12px;letter-spacing:-0.15px;">Simulation</span>
<span class="t " style="left:105.5px;top:75.3px;font-size:12px;letter-spacing:-0.30px;">Evaluator</span>
<span class="t " style="left:167.0px;top:62.3px;font-size:12px;letter-spacing:-0.33px;">Fixtures</span>
<span class="t " style="left:168.0px;top:75.3px;font-size:12px;letter-spacing:-0.29px;">Advisor</span>
<span class="t " style="left:217.0px;top:62.3px;font-size:12px;letter-spacing:-0.43px;">External Loads</span>
<span class="t " style="left:235.0px;top:75.3px;font-size:12px;letter-spacing:-0.29px;">Advisor</span>
<span class="t " style="left:300.8px;top:62.3px;font-size:12px;letter-spacing:-0.20px;">Connections</span>
<span class="t " style="left:314.0px;top:75.3px;font-size:12px;letter-spacing:-0.29px;">Advisor</span>
<span class="t " style="left:386.5px;top:62.3px;font-size:12px;letter-spacing:-0.34px;">Shell</span>
<span class="t " style="left:376.0px;top:75.3px;font-size:12px;letter-spacing:-0.19px;">Manager</span>
<span class="t " style="left:432.5px;top:62.3px;font-size:12px;letter-spacing:-0.60px;">Run This</span>
<span class="t " style="left:439.5px;top:75.3px;font-size:12px;letter-spacing:-0.34px;">Study</span>
<span class="t " style="left:489.5px;top:62.3px;font-size:12px;letter-spacing:-0.57px;">Results</span>
<span class="t " style="left:488.5px;top:75.3px;font-size:12px;letter-spacing:-0.29px;">Advisor</span>
<span class="t " style="left:536.5px;top:62.3px;font-size:12px;letter-spacing:-0.21px;">Deformed</span>
<span class="t " style="left:546.0px;top:75.3px;font-size:12px;letter-spacing:-0.34px;">Result</span>
<span class="t " style="left:598.2px;top:62.3px;font-size:12px;letter-spacing:-0.55px;">Compare</span>
<span class="t " style="left:603.0px;top:75.3px;font-size:12px;letter-spacing:-0.57px;">Results</span>
<span class="t " style="left:677.0px;top:42.8px;font-size:12px;letter-spacing:-0.07px;">Design Insight</span>
<span class="t " style="left:677.0px;top:68.8px;font-size:12px;letter-spacing:-0.33px;">Plot Tools</span>
<span class="t " style="left:807.5px;top:42.8px;font-size:12px;letter-spacing:-0.25px;">Report</span>
<span class="t " style="left:807.5px;top:68.8px;font-size:12px;letter-spacing:-0.21px;">Include Image for Report</span>
<span class="t " style="left:976.5px;top:42.8px;font-size:12px;letter-spacing:-0.06px;">Offloaded Simulation</span>
<span class="t " style="left:976.5px;top:68.8px;font-size:12px;letter-spacing:-0.16px;">Manage Network</span>
<span class="t " style="left:8.0px;top:121.8px;font-size:12px;letter-spacing:-0.13px;">Assembly</span>
<span class="t " style="left:77.0px;top:121.8px;font-size:12px;letter-spacing:-0.00px;">Layout</span>
<span class="t " style="left:133.5px;top:121.8px;font-size:12px;letter-spacing:-0.53px;">Sketch</span>
<span class="t " style="left:187.0px;top:121.8px;font-size:12px;letter-spacing:0.08px;">Markup</span>
<span class="t " style="left:244.0px;top:121.8px;font-size:12px;letter-spacing:-0.46px;">Evaluate</span>
<span class="t " style="left:304.5px;top:121.8px;font-size:12px;letter-spacing:-0.52px;">SOLIDWORKS Add-Ins</span>
<span class="t " style="left:436.5px;top:121.8px;font-size:12px;letter-spacing:-0.28px;font-weight:bold;">Simulation</span>
<span class="t " style="left:519.5px;top:121.8px;font-size:12px;letter-spacing:-0.56px;">MBD</span>
<span class="t " style="left:568.5px;top:121.8px;font-size:12px;letter-spacing:-0.74px;">SOLIDWORKS CAM</span>
<span class="t " style="left:1332.5px;top:11.8px;font-size:12px;letter-spacing:-0.67px;">BP Spear Assembly.SLD...</span>
<span class="t " style="left:1529.5px;top:11.8px;font-size:12px;letter-spacing:-0.65px;color:#6a6a6a;">Search Commands</span>
<span class="t " style="left:24.0px;top:191.1px;font-size:12px;letter-spacing:-0.01px;">Study 1 fine mesh (-Default-)</span>
<span class="t " style="left:47.0px;top:213.1px;font-size:12px;letter-spacing:-0.40px;">Parts</span>
<span class="t " style="left:47.0px;top:235.1px;font-size:12px;letter-spacing:0.03px;">Connections</span>
<span class="t " style="left:70.0px;top:257.1px;font-size:12px;letter-spacing:-0.22px;">Contact Sets</span>
<span class="t " style="left:47.0px;top:279.1px;font-size:12px;letter-spacing:-0.33px;">Fixtures</span>
<span class="t " style="left:70.0px;top:301.1px;font-size:12px;letter-spacing:-0.36px;">Fixed-1</span>
<span class="t " style="left:47.0px;top:323.1px;font-size:12px;letter-spacing:-0.36px;">External Loads</span>
<span class="t " style="left:70.0px;top:345.1px;font-size:12px;letter-spacing:-0.18px;">Force-1 (:Per item: 1,000 lbf:)</span>
<span class="t " style="left:47.0px;top:367.1px;font-size:12px;letter-spacing:-0.09px;">Mesh</span>
<span class="t " style="left:47.0px;top:389.1px;font-size:12px;letter-spacing:-0.12px;">Result Options</span>
<span class="t " style="left:47.0px;top:411.1px;font-size:12px;letter-spacing:-0.48px;font-weight:bold;">Results</span>
<span class="t " style="left:70.0px;top:433.1px;font-size:12px;letter-spacing:-0.17px;font-weight:bold;">Stress1 (-vonMises-)</span>
<span class="t " style="left:70.0px;top:455.1px;font-size:12px;letter-spacing:-0.13px;">Displacement1 (-Res disp-)</span>
<span class="t " style="left:70.0px;top:477.1px;font-size:12px;letter-spacing:-0.06px;">Strain1 (-Equivalent-)</span>
<span class="t " style="left:297.0px;top:150.8px;font-size:12px;letter-spacing:-0.19px;">Model name: BP Spear Assembly</span>
<span class="t " style="left:297.0px;top:165.8px;font-size:12px;letter-spacing:-0.04px;">Study name: Study 1 fine mesh(-Default-)</span>
<span class="t " style="left:297.0px;top:180.8px;font-size:12px;letter-spacing:-0.25px;">Plot type: Static nodal stress Stress1</span>
<span class="t " style="left:297.0px;top:195.8px;font-size:12px;letter-spacing:-0.15px;">Deformation scale: 1</span>
<span class="t " style="left:297.0px;top:210.8px;font-size:12px;letter-spacing:0.04px;">Global value: 0 to 0 N/m^2</span>
<span class="t " style="left:1593.5px;top:305.8px;font-size:12px;letter-spacing:0.20px;">von Mises (N/m^2)</span>
<span class="t " style="left:1630.5px;top:335.8px;font-size:11.5px;letter-spacing:-0.24px;">1.000e+06</span>
<span class="t " style="left:1630.5px;top:365.8px;font-size:11.5px;letter-spacing:-0.24px;">9.000e+05</span>
<span class="t " style="left:1630.5px;top:395.8px;font-size:11.5px;letter-spacing:-0.24px;">8.001e+05</span>
<span class="t " style="left:1630.5px;top:425.8px;font-size:11.5px;letter-spacing:-0.24px;">7.001e+05</span>
<span class="t " style="left:1630.5px;top:455.8px;font-size:11.5px;letter-spacing:-0.24px;">6.001e+05</span>
<span class="t " style="left:1630.5px;top:485.8px;font-size:11.5px;letter-spacing:-0.24px;">5.002e+05</span>
<span class="t " style="left:1630.5px;top:515.8px;font-size:11.5px;letter-spacing:-0.24px;">4.002e+05</span>
<span class="t " style="left:1630.5px;top:545.8px;font-size:11.5px;letter-spacing:-0.24px;">3.002e+05</span>
<span class="t " style="left:1630.5px;top:575.8px;font-size:11.5px;letter-spacing:-0.24px;">2.003e+05</span>
<span class="t " style="left:1630.5px;top:605.8px;font-size:11.5px;letter-spacing:-0.24px;">1.003e+05</span>
<span class="t " style="left:1630.5px;top:635.8px;font-size:11.5px;letter-spacing:-0.24px;">3.437e+02</span>
<span class="t " style="left:81.0px;top:1046.8px;font-size:12px;letter-spacing:0.16px;">Model</span>
<span class="t " style="left:134.0px;top:1046.8px;font-size:12px;letter-spacing:-0.43px;">3D Views</span>
<span class="t " style="left:201.0px;top:1046.8px;font-size:12px;letter-spacing:0.07px;">Motion Study 1</span>
<span class="t " style="left:318.0px;top:1046.8px;font-size:12px;letter-spacing:-0.31px;">Study 1</span>
<span class="t " style="left:392.0px;top:1046.8px;font-size:12px;letter-spacing:-0.24px;">Study 2</span>
<span class="t " style="left:466.0px;top:1046.8px;font-size:12px;letter-spacing:-0.25px;">Static 2</span>
<span class="t " style="left:537.0px;top:1046.8px;font-size:12px;letter-spacing:-0.16px;font-weight:bold;">Study 1 fine mesh</span>
<span class="t " style="left:2.0px;top:1065.8px;font-size:12px;letter-spacing:-0.56px;">SOLIDWORKS Premium 2021 Beta 1</span>
<span class="t " style="left:1511.0px;top:1065.8px;font-size:12px;letter-spacing:-0.14px;">Under Defined</span>
<span class="t " style="left:1605.0px;top:1065.8px;font-size:12px;letter-spacing:-0.02px;">Editing Assembly</span>
<span class="t " style="left:1824.0px;top:1065.8px;font-size:12px;letter-spacing:-1.11px;">IPS</span>
</body></html>
